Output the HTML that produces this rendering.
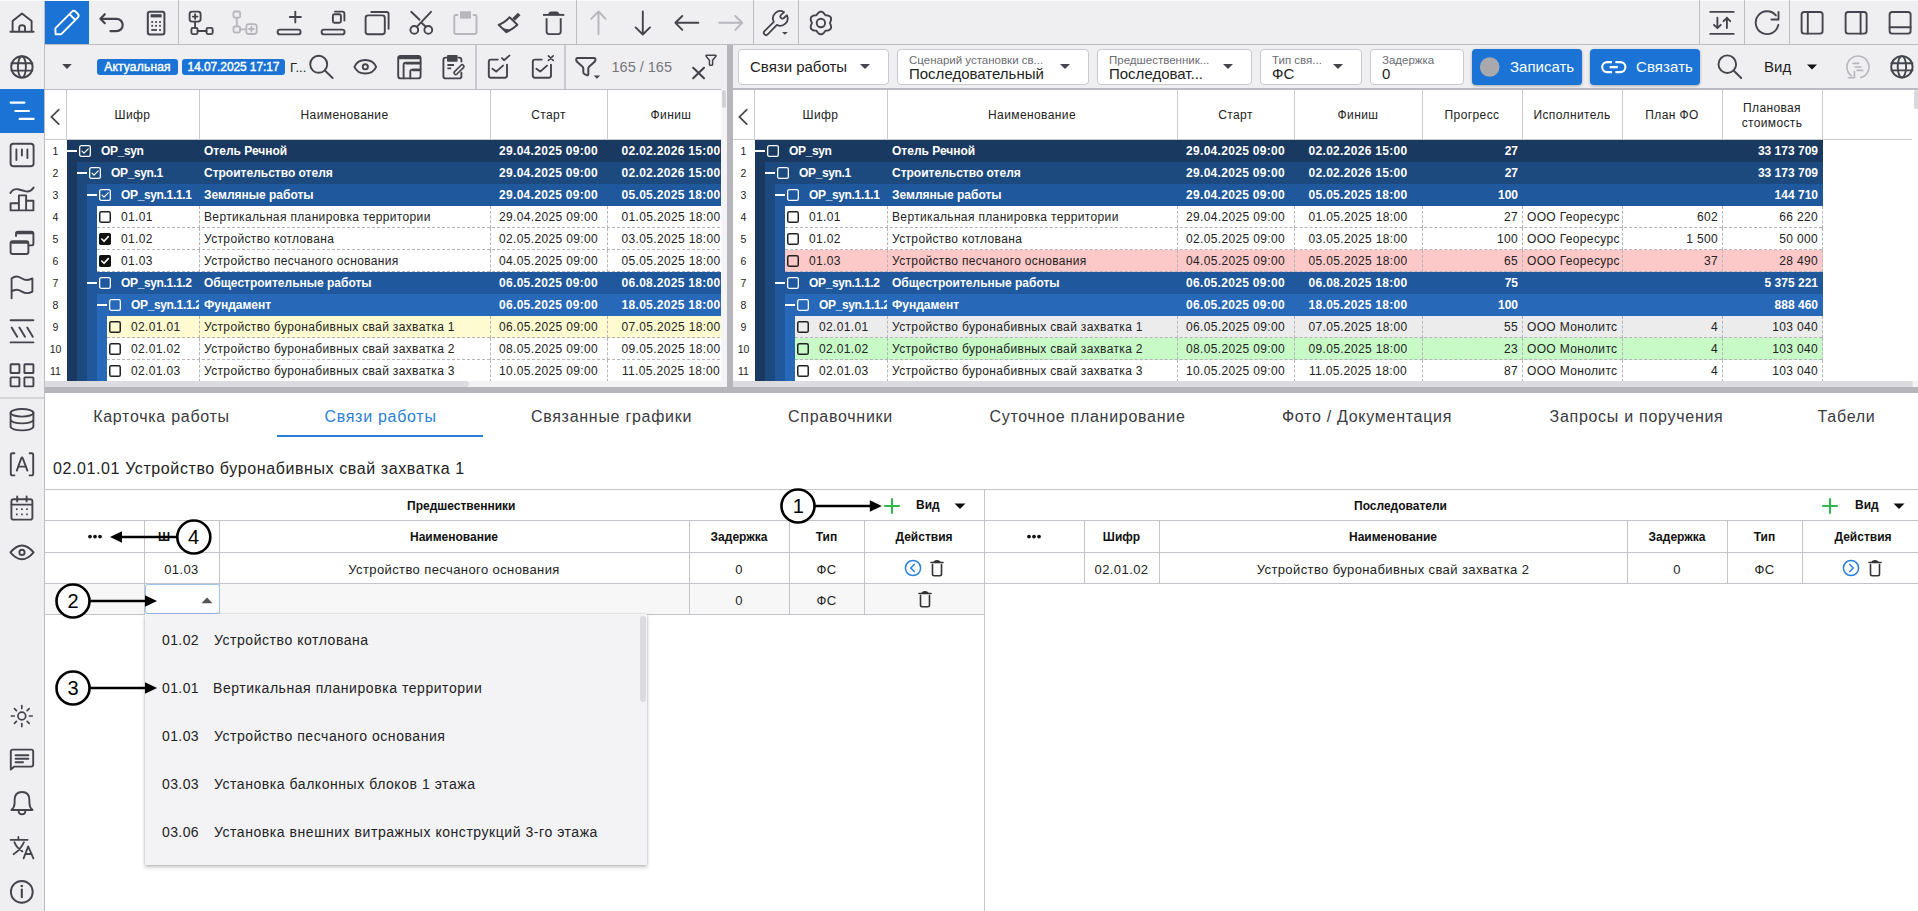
<!DOCTYPE html>
<html><head><meta charset="utf-8"><style>
html,body{margin:0;padding:0;width:1918px;height:911px;overflow:hidden;background:#fff;font-family:"Liberation Sans", sans-serif;color:#222}
svg{overflow:visible}
</style></head><body>
<div style="position:absolute;left:0px;top:0px;width:1918px;height:911px;background:#fff"></div>
<div style="position:absolute;left:0px;top:0px;width:44px;height:911px;background:#efeff2"></div>
<div style="position:absolute;left:44px;top:0px;width:1px;height:911px;background:#bcbcc3"></div>
<div style="position:absolute;left:0px;top:397px;width:44px;height:2px;background:#d3d3d8"></div>
<div style="position:absolute;left:0px;top:89px;width:44px;height:44px;background:#1b74d5"></div>
<div style="position:absolute;left:45px;top:0px;width:1873px;height:44px;background:#efeff2"></div>
<div style="position:absolute;left:45px;top:44px;width:1873px;height:1px;background:#bcbcc3"></div>
<div style="position:absolute;left:45px;top:45px;width:1873px;height:44px;background:#efeff2"></div>
<div style="position:absolute;left:45px;top:89px;width:682px;height:1px;background:#bcbcc3"></div>
<div style="position:absolute;left:733px;top:88px;width:1185px;height:2px;background:#b9b9c0"></div>
<div style="position:absolute;left:45px;top:1px;width:44px;height:43px;background:#1b74d5"></div>
<div style="position:absolute;left:0px;top:0px;width:1918px;height:1px;background:#fafafb"></div>
<div style="position:absolute;left:178px;top:0px;width:1px;height:44px;background:#bcbcc3"></div>
<div style="position:absolute;left:576px;top:0px;width:1px;height:44px;background:#bcbcc3"></div>
<div style="position:absolute;left:753px;top:0px;width:1px;height:44px;background:#bcbcc3"></div>
<div style="position:absolute;left:798px;top:0px;width:1px;height:44px;background:#bcbcc3"></div>
<div style="position:absolute;left:1699px;top:0px;width:1px;height:44px;background:#bcbcc3"></div>
<div style="position:absolute;left:1744px;top:0px;width:1px;height:44px;background:#bcbcc3"></div>
<div style="position:absolute;left:1789px;top:0px;width:1px;height:44px;background:#bcbcc3"></div>
<div style="position:absolute;left:475px;top:45px;width:2px;height:44px;background:#cacad0"></div>
<div style="position:absolute;left:564px;top:45px;width:2px;height:44px;background:#cacad0"></div>
<svg style="position:absolute;left:45px;top:0px;" width="44" height="44" viewBox="45 0 44 44" fill="none" stroke-linecap="round" stroke-linejoin="round"><path stroke="#fff" stroke-width="1.9" d="M55.6 34.3 L55.3 28.3 L72 11.6 Q73.8 10 75.6 11.6 L77.9 13.9 Q79.4 15.7 77.9 17.4 L61.3 34.2 Z M69.5 14.2 L75.3 20"/></svg>
<svg style="position:absolute;left:89px;top:0px;" width="44" height="44" viewBox="89 0 44 44" fill="none" stroke-linecap="round" stroke-linejoin="round"><path stroke="#44444c" stroke-width="2.2" d="M104.8 14.2 L100.4 18.8 L104.8 23.2 M100.8 18.8 H116.5 A6.2 6.2 0 0 1 116.5 31.2 H110.5"/></svg>
<svg style="position:absolute;left:133px;top:0px;" width="44" height="44" viewBox="133 0 44 44" fill="none" stroke-linecap="round" stroke-linejoin="round"><rect x="147.8" y="11.8" width="16.6" height="22.6" rx="2.2" stroke="#44444c" stroke-width="2"/><rect x="150.6" y="14.2" width="11" height="3.2" fill="#44444c"/><rect x="151.29999999999998" y="21.1" width="1.8" height="1.8" fill="#44444c"/><rect x="155.2" y="21.1" width="1.8" height="1.8" fill="#44444c"/><rect x="159.1" y="21.1" width="1.8" height="1.8" fill="#44444c"/><rect x="151.29999999999998" y="24.900000000000002" width="1.8" height="1.8" fill="#44444c"/><rect x="155.2" y="24.900000000000002" width="1.8" height="1.8" fill="#44444c"/><rect x="159.1" y="24.900000000000002" width="1.8" height="1.8" fill="#44444c"/><rect x="151.3" y="29.1" width="5.6" height="1.8" fill="#44444c"/><rect x="159.1" y="29.1" width="1.8" height="1.8" fill="#44444c"/></svg>
<svg style="position:absolute;left:179px;top:0px;" width="44" height="44" viewBox="179 0 44 44" fill="none" stroke-linecap="round" stroke-linejoin="round"><rect x="189.6" y="11.6" width="11" height="10" rx="2.5" stroke="#44444c" stroke-width="1.9"/><path stroke="#44444c" stroke-width="1.9" d="M195.1 14.3 V18.9 M192.8 16.6 H197.4 M195.1 21.6 V28 M197.6 31 H206.5"/><rect x="191.4" y="27.9" width="6.2" height="6.2" rx="1.5" stroke="#44444c" stroke-width="1.9"/><rect x="206.5" y="27.9" width="6.2" height="6.2" rx="1.5" stroke="#44444c" stroke-width="1.9"/></svg>
<svg style="position:absolute;left:223px;top:0px;" width="44" height="44" viewBox="223 0 44 44" fill="none" stroke-linecap="round" stroke-linejoin="round"><rect x="233.5" y="11.5" width="6.6" height="6.2" rx="1.5" stroke="#b6b6bd" stroke-width="1.8"/><path stroke="#b6b6bd" stroke-width="1.8" d="M236.8 17.7 V26.5 M240.1 29.3 H246.3 M251.4 26.6 V31.4 M249 29 H253.8"/><rect x="233.5" y="26.3" width="6.6" height="6.2" rx="1.5" stroke="#b6b6bd" stroke-width="1.8"/><rect x="246.3" y="24.2" width="10.4" height="9.8" rx="2.5" stroke="#b6b6bd" stroke-width="1.8"/></svg>
<svg style="position:absolute;left:267px;top:0px;" width="44" height="44" viewBox="267 0 44 44" fill="none" stroke-linecap="round" stroke-linejoin="round"><path stroke="#44444c" stroke-width="1.9" d="M295.3 11.6 V22.4 M289.8 17 H300.9"/><rect x="277.6" y="29.6" width="23" height="4.8" rx="2.4" stroke="#44444c" stroke-width="1.9"/></svg>
<svg style="position:absolute;left:311px;top:0px;" width="44" height="44" viewBox="311 0 44 44" fill="none" stroke-linecap="round" stroke-linejoin="round"><path stroke="#44444c" stroke-width="1.9" d="M335 11.6 H342.5 Q344.4 11.6 344.4 13.5 V20.5"/><rect x="332.9" y="14.3" width="8" height="8.5" rx="1.5" stroke="#44444c" stroke-width="1.9"/><rect x="321.6" y="29.6" width="23" height="4.8" rx="2.4" stroke="#44444c" stroke-width="1.9"/></svg>
<svg style="position:absolute;left:355px;top:0px;" width="44" height="44" viewBox="355 0 44 44" fill="none" stroke-linecap="round" stroke-linejoin="round"><path stroke="#44444c" stroke-width="1.9" d="M371.3 12 H386.5 Q388.6 12 388.6 14.1 V28.8"/><rect x="365.6" y="15.4" width="19.2" height="18.9" rx="2.5" stroke="#44444c" stroke-width="1.9"/></svg>
<svg style="position:absolute;left:399px;top:0px;" width="44" height="44" viewBox="399 0 44 44" fill="none" stroke-linecap="round" stroke-linejoin="round"><circle cx="414.3" cy="29.9" r="3.9" stroke="#44444c" stroke-width="1.9"/><circle cx="428.3" cy="29.9" r="3.9" stroke="#44444c" stroke-width="1.9"/><path stroke="#44444c" stroke-width="1.9" d="M411.2 11.8 L419.5 19.8 M431 11.8 L416.8 26.8 M421.2 22.5 L425.8 26.8"/></svg>
<svg style="position:absolute;left:443px;top:0px;" width="44" height="44" viewBox="443 0 44 44" fill="none" stroke-linecap="round" stroke-linejoin="round"><path stroke="#b6b6bd" stroke-width="1.9" d="M457.5 15 H455.6 Q454.3 15 454.3 16.4 V32.6 Q454.3 34 455.7 34 H475 Q476.5 34 476.5 32.6 V16.4 Q476.5 15 475.1 15 H473.6"/><rect x="460" y="11.3" width="11" height="7.3" fill="#b6b6bd"/></svg>
<svg style="position:absolute;left:487px;top:0px;" width="44" height="44" viewBox="487 0 44 44" fill="none" stroke-linecap="round" stroke-linejoin="round"><path stroke="#44444c" stroke-width="3.6" stroke-linecap="butt" d="M519.2 13.9 L513.6 19.6"/><path stroke="#44444c" stroke-width="1.9" d="M509.6 17.2 Q504.8 22.6 498.6 24.8 L506.4 32.2 Q512.6 29.4 517.4 24.8 Z"/><path fill="#44444c" d="M501.2 27.3 L506.4 32.6 Q509.6 31.2 511.8 29.4 Q505.5 29.6 501.2 27.3 Z"/></svg>
<svg style="position:absolute;left:531px;top:0px;" width="44" height="44" viewBox="531 0 44 44" fill="none" stroke-linecap="round" stroke-linejoin="round"><path stroke="#44444c" stroke-width="1.9" stroke-linecap="butt" d="M543 14.9 H564.3"/><path stroke="#44444c" stroke-width="1.9" stroke-linecap="butt" d="M546.6 18.2 V31.6 Q546.6 34.1 549.1 34.1 H558.2 Q560.7 34.1 560.7 31.6 V18.2"/><path fill="#44444c" d="M547.8 14.9 Q548.6 11.4 551 11.4 H556.6 Q559 11.4 559.7 14.9 Z"/></svg>
<svg style="position:absolute;left:577px;top:0px;" width="44" height="44" viewBox="577 0 44 44" fill="none" stroke-linecap="round" stroke-linejoin="round"><path stroke="#b6b6bd" stroke-width="1.9" d="M598.5 11.5 V34.3 M591.2 18.8 L598.5 11.5 L605.6 18.8"/></svg>
<svg style="position:absolute;left:621px;top:0px;" width="44" height="44" viewBox="621 0 44 44" fill="none" stroke-linecap="round" stroke-linejoin="round"><path stroke="#44444c" stroke-width="1.9" d="M642.8 11.5 V34.5 M635.6 27.4 L642.8 34.5 L650 27.4"/></svg>
<svg style="position:absolute;left:665px;top:0px;" width="44" height="44" viewBox="665 0 44 44" fill="none" stroke-linecap="round" stroke-linejoin="round"><path stroke="#44444c" stroke-width="1.9" d="M675.4 22.8 H698.4 M682.3 16 L675.4 22.8 L682.3 29.8"/></svg>
<svg style="position:absolute;left:709px;top:0px;" width="44" height="44" viewBox="709 0 44 44" fill="none" stroke-linecap="round" stroke-linejoin="round"><path stroke="#b6b6bd" stroke-width="1.9" d="M719.2 22.8 H742.2 M735.3 16 L742.2 22.8 L735.3 29.8"/></svg>
<svg style="position:absolute;left:754px;top:0px;" width="44" height="44" viewBox="754 0 44 44" fill="none" stroke-linecap="round" stroke-linejoin="round"><path stroke="#44444c" stroke-width="1.8" d="M773.8 21.8 L764.5 31.2 A2.2 2.2 0 0 0 767.7 34.4 L776.9 24.9 A7.3 7.3 0 0 0 786.9 15.3 L783.6 18.2 A2.07 2.07 0 0 1 780.8 15.2 L784.1 12.2 A7.3 7.3 0 0 0 773.8 21.8 Z"/><path fill="#44444c" d="M782 32.1 H787.8 L784.9 34.8 Z"/></svg>
<svg style="position:absolute;left:799px;top:0px;" width="44" height="44" viewBox="799 0 44 44" fill="none" stroke-linecap="round" stroke-linejoin="round"><path stroke="#44444c" stroke-width="1.9" d="M829.90 23.00 L830.13 23.65 L830.46 24.34 L830.77 25.10 L831.01 25.90 L831.12 26.72 L831.08 27.53 L830.86 28.30 L830.47 28.98 L829.92 29.55 L829.23 29.99 L828.47 30.31 L827.65 30.50 L826.84 30.61 L826.08 30.67 L825.40 30.79 L824.96 31.32 L824.52 31.95 L824.02 32.60 L823.44 33.21 L822.79 33.72 L822.06 34.08 L821.29 34.28 L820.51 34.28 L819.74 34.08 L819.01 33.72 L818.36 33.21 L817.78 32.60 L817.28 31.95 L816.84 31.32 L816.40 30.79 L815.72 30.67 L814.96 30.61 L814.15 30.50 L813.33 30.31 L812.57 29.99 L811.88 29.55 L811.33 28.98 L810.94 28.30 L810.72 27.53 L810.68 26.72 L810.79 25.90 L811.03 25.10 L811.34 24.34 L811.67 23.65 L811.90 23.00 L811.67 22.35 L811.34 21.66 L811.03 20.90 L810.79 20.10 L810.68 19.28 L810.72 18.47 L810.94 17.70 L811.33 17.02 L811.88 16.45 L812.57 16.01 L813.33 15.69 L814.15 15.50 L814.96 15.39 L815.72 15.33 L816.40 15.21 L816.84 14.68 L817.28 14.05 L817.78 13.40 L818.36 12.79 L819.01 12.28 L819.74 11.92 L820.51 11.72 L821.29 11.72 L822.06 11.92 L822.79 12.28 L823.44 12.79 L824.02 13.40 L824.52 14.05 L824.96 14.68 L825.40 15.21 L826.08 15.33 L826.84 15.39 L827.65 15.50 L828.47 15.69 L829.23 16.01 L829.92 16.45 L830.47 17.02 L830.86 17.70 L831.08 18.47 L831.12 19.28 L831.01 20.10 L830.77 20.90 L830.46 21.66 L830.13 22.35 L829.90 23.00 Z"/><circle cx="820.9" cy="23" r="4.2" stroke="#44444c" stroke-width="1.9"/></svg>
<svg style="position:absolute;left:1700px;top:0px;" width="44" height="44" viewBox="1700 0 44 44" fill="none" stroke-linecap="round" stroke-linejoin="round"><path stroke="#44444c" stroke-width="1.9" d="M1710.3 11.9 H1733.7 M1710.3 33.9 H1733.7 M1717.4 17.8 V28 M1714 24.8 L1717.4 28.2 L1720.8 24.8 M1726.9 28 V17.8 M1723.6 21.2 L1726.9 17.8 L1730.2 21.2"/></svg>
<svg style="position:absolute;left:1745px;top:0px;" width="44" height="44" viewBox="1745 0 44 44" fill="none" stroke-linecap="round" stroke-linejoin="round"><path stroke="#44444c" stroke-width="1.9" d="M1775.9 15.4 A11.4 11.4 0 1 0 1778.3 24.9"/><path stroke="#44444c" stroke-width="1.9" d="M1778.5 12 V19.5 H1771.4"/></svg>
<svg style="position:absolute;left:1790px;top:0px;" width="44" height="44" viewBox="1790 0 44 44" fill="none" stroke-linecap="round" stroke-linejoin="round"><rect x="1801.6" y="12" width="21" height="21.6" rx="2.6" stroke="#44444c" stroke-width="1.9"/><path stroke="#44444c" stroke-width="1.9" d="M1807.8 12 V33.6"/></svg>
<svg style="position:absolute;left:1834px;top:0px;" width="44" height="44" viewBox="1834 0 44 44" fill="none" stroke-linecap="round" stroke-linejoin="round"><rect x="1845.6" y="12" width="21" height="21.6" rx="2.6" stroke="#44444c" stroke-width="1.9"/><path stroke="#44444c" stroke-width="1.9" d="M1860.6 12 V33.6"/></svg>
<svg style="position:absolute;left:1878px;top:0px;" width="40" height="44" viewBox="1878 0 40 44" fill="none" stroke-linecap="round" stroke-linejoin="round"><rect x="1889.6" y="12" width="21" height="21.6" rx="2.6" stroke="#44444c" stroke-width="1.9"/><path stroke="#44444c" stroke-width="1.9" d="M1889.6 27.3 H1910.6"/></svg>
<svg style="position:absolute;left:55px;top:55px;" width="24" height="24" viewBox="55 55 24 24" fill="none" stroke-linecap="round" stroke-linejoin="round"><path fill="#44444c" d="M62.2 64 H71.8 L67 69 Z"/></svg>
<div style="position:absolute;left:97px;top:59px;width:81px;height:16px;background:#1b74d5;border-radius:3px;color:#fff;font-size:12px;line-height:16px;text-align:center;letter-spacing:0.2px;-webkit-text-stroke:0.4px #fff">Актуальная</div>
<div style="position:absolute;left:182px;top:59px;width:103px;height:16px;background:#1b74d5;border-radius:3px;color:#fff;font-size:12px;line-height:16px;text-align:center;letter-spacing:-0.1px;-webkit-text-stroke:0.4px #fff">14.07.2025 17:17</div>
<div style="position:absolute;left:290px;top:60px;white-space:nowrap;font-size:13px;line-height:16px;color:#222;width:22px;">Г...</div>
<svg style="position:absolute;left:305px;top:45px;" width="40" height="43" viewBox="305 45 40 43" fill="none" stroke-linecap="round" stroke-linejoin="round"><circle cx="318.7" cy="64.3" r="8.5" stroke="#44444c" stroke-width="1.9"/><path stroke="#44444c" stroke-width="1.9" d="M324.9 70.5 L332.6 78"/></svg>
<svg style="position:absolute;left:350px;top:45px;" width="30" height="43" viewBox="350 45 30 43" fill="none" stroke-linecap="round" stroke-linejoin="round"><path stroke="#44444c" stroke-width="1.9" d="M354.4 66.8 C358.6 57.8 372 57.8 376.2 66.8 C372 75.8 358.6 75.8 354.4 66.8 Z"/><circle cx="365.3" cy="66.8" r="2.6" stroke="#44444c" stroke-width="1.9"/></svg>
<svg style="position:absolute;left:395px;top:45px;" width="30" height="43" viewBox="395 45 30 43" fill="none" stroke-linecap="round" stroke-linejoin="round"><rect x="398.2" y="56" width="22.4" height="22.4" rx="2.4" stroke="#44444c" stroke-width="1.9"/><path stroke="#44444c" stroke-width="2.8" d="M399 57.8 H419.8"/><path stroke="#44444c" stroke-width="1.9" d="M403.6 78.2 V65 Q403.6 62.8 405.8 62.8 H420.4 M410.3 78.2 V71.4 Q410.3 69.6 412.3 69.6 H420.4"/><path stroke="#44444c" stroke-width="2.6" stroke-linecap="butt" d="M405.6 63.2 H420 M412.2 70 H420"/></svg>
<svg style="position:absolute;left:438px;top:45px;" width="30" height="43" viewBox="438 45 30 43" fill="none" stroke-linecap="round" stroke-linejoin="round"><path stroke="#44444c" stroke-width="1.9" d="M446.6 57.6 H445.6 Q443.4 57.6 443.4 59.8 V76.2 Q443.4 78.4 445.6 78.4 H459.2 Q461.4 78.4 461.4 76.2 V72.8 M461.4 61.6 V59.8 Q461.4 57.6 459.2 57.6 H458.4"/><rect x="447" y="55" width="10.6" height="6.8" rx="0.8" fill="#44444c"/><path stroke="#44444c" stroke-width="1.9" stroke-linecap="butt" d="M447.4 65 H454 M447.4 68.4 H451.2"/><path stroke="#44444c" stroke-width="1.6" d="M454.6 74 Q453.4 72.8 454.6 71.6 L461 65.2 Q462.2 64 463.4 65.2 Q464.6 66.4 463.4 67.6 L457 74 Q455.8 75.2 454.6 74 Z"/></svg>
<svg style="position:absolute;left:485px;top:45px;" width="28" height="43" viewBox="485 45 28 43" fill="none" stroke-linecap="round" stroke-linejoin="round"><path stroke="#44444c" stroke-width="1.9" d="M497.8 59.6 H491 Q488.8 59.6 488.8 61.8 V75.6 Q488.8 77.8 491 77.8 H504.8 Q507 77.8 507 75.6 V64.6 M492.4 68.8 L496.2 71.6 L503 65.6 M502 58.2 L504 60.2 L509.4 55.6"/></svg>
<svg style="position:absolute;left:529px;top:45px;" width="28" height="43" viewBox="529 45 28 43" fill="none" stroke-linecap="round" stroke-linejoin="round"><path stroke="#44444c" stroke-width="1.9" d="M541.8 59.6 H535 Q532.8 59.6 532.8 61.8 V75.6 Q532.8 77.8 535 77.8 H548.8 Q551 77.8 551 75.6 V64.6 M536.4 68.8 L540.2 71.6 L547 65.6"/><path stroke="#44444c" stroke-width="1.6" d="M548.4 55.8 L553.2 60.4 M553.2 55.8 L548.4 60.4"/></svg>
<svg style="position:absolute;left:572px;top:45px;" width="32" height="43" viewBox="572 45 32 43" fill="none" stroke-linecap="round" stroke-linejoin="round"><path stroke="#44444c" stroke-width="2" d="M577.6 58.1 H594.2 Q595.6 58.1 595.4 60 Q595.2 61.4 593.8 62.6 L589.3 66.5 Q588.3 67.4 588.3 68.6 V74 Q588.3 75.6 586.8 75.1 L585 74.4 Q583.3 73.7 583.3 72 V68.6 Q583.3 67.4 582.3 66.5 L577.8 62.6 Q576.4 61.4 576.2 60 Q576 58.1 577.6 58.1 Z"/><path fill="#44444c" d="M593.6 75.6 H600.2 L596.9 78.8 Z"/></svg>
<div style="position:absolute;left:611.5px;top:46px;white-space:nowrap;font-size:14.5px;color:#76767c;letter-spacing:0.1pxheight:43px;line-height:43px;">165 / 165</div>
<svg style="position:absolute;left:690px;top:45px;" width="30" height="43" viewBox="690 45 30 43" fill="none" stroke-linecap="round" stroke-linejoin="round"><path stroke="#44444c" stroke-width="2.1" d="M693.2 67.8 L704 78.3 M704 67.8 L693.2 78.3"/><path stroke="#44444c" stroke-width="1.5" d="M706.1 56.2 Q705.5 55.3 706.6 55.3 H715.4 Q716.5 55.3 715.9 56.2 L712.6 60.2 V64.4 Q712.6 65.3 711.6 65.3 H710.4 Q709.4 65.3 709.4 64.4 V60.2 Z"/></svg>
<div style="position:absolute;left:738px;top:49px;width:149px;height:34px;background:#fff;border:1px solid #c9c9cf;border-radius:4px"></div>
<div style="position:absolute;left:750px;top:49px;white-space:nowrap;font-size:15px;color:#1e1e22;height:35px;line-height:35px;">Связи работы</div>
<svg style="position:absolute;left:856.6px;top:58px;" width="16" height="16" viewBox="856.6 58 16 16" fill="none" stroke-linecap="round" stroke-linejoin="round"><path fill="#44444c" d="M859.6 64 H869.6 L864.6 69 Z"/></svg>
<div style="position:absolute;left:897px;top:49px;width:190px;height:34px;background:#fff;border:1px solid #c9c9cf;border-radius:4px"></div>
<div style="position:absolute;left:909px;top:53px;white-space:nowrap;font-size:11.5px;color:#6c6c72;letter-spacing:0.1pxheight:15px;line-height:15px;">Сценарий установки св...</div>
<div style="position:absolute;left:909px;top:65px;white-space:nowrap;font-size:15px;color:#1e1e22;height:18px;line-height:18px;">Последовательный</div>
<svg style="position:absolute;left:1057px;top:58px;" width="16" height="16" viewBox="1057 58 16 16" fill="none" stroke-linecap="round" stroke-linejoin="round"><path fill="#44444c" d="M1060 64 H1070 L1065 69 Z"/></svg>
<div style="position:absolute;left:1097px;top:49px;width:153px;height:34px;background:#fff;border:1px solid #c9c9cf;border-radius:4px"></div>
<div style="position:absolute;left:1109px;top:53px;white-space:nowrap;font-size:11.5px;color:#6c6c72;letter-spacing:0.1pxheight:15px;line-height:15px;">Предшественник...</div>
<div style="position:absolute;left:1109px;top:65px;white-space:nowrap;font-size:15px;color:#1e1e22;height:18px;line-height:18px;">Последоват...</div>
<svg style="position:absolute;left:1220px;top:58px;" width="16" height="16" viewBox="1220 58 16 16" fill="none" stroke-linecap="round" stroke-linejoin="round"><path fill="#44444c" d="M1223 64 H1233 L1228 69 Z"/></svg>
<div style="position:absolute;left:1260px;top:49px;width:100px;height:34px;background:#fff;border:1px solid #c9c9cf;border-radius:4px"></div>
<div style="position:absolute;left:1272px;top:53px;white-space:nowrap;font-size:11.5px;color:#6c6c72;letter-spacing:0.1pxheight:15px;line-height:15px;">Тип свя...</div>
<div style="position:absolute;left:1272px;top:65px;white-space:nowrap;font-size:15px;color:#1e1e22;height:18px;line-height:18px;">ФС</div>
<svg style="position:absolute;left:1330px;top:58px;" width="16" height="16" viewBox="1330 58 16 16" fill="none" stroke-linecap="round" stroke-linejoin="round"><path fill="#44444c" d="M1333 64 H1343 L1338 69 Z"/></svg>
<div style="position:absolute;left:1370px;top:49px;width:92px;height:34px;background:#fff;border:1px solid #c9c9cf;border-radius:4px"></div>
<div style="position:absolute;left:1382px;top:53px;white-space:nowrap;font-size:11.5px;color:#6c6c72;letter-spacing:0.1pxheight:15px;line-height:15px;">Задержка</div>
<div style="position:absolute;left:1382px;top:65px;white-space:nowrap;font-size:15px;color:#1e1e22;height:18px;line-height:18px;">0</div>
<div style="position:absolute;left:1472px;top:49px;width:110px;height:36px;background:#1b74d5;border-radius:4px;box-shadow:0 1px 3px rgba(0,0,0,.3)"></div>
<svg style="position:absolute;left:1478px;top:55px;" width="24" height="24" viewBox="1478 55 24 24" fill="none" stroke-linecap="round" stroke-linejoin="round"><circle cx="1489.7" cy="67" r="9.8" fill="#a9a9ad"/></svg>
<div style="position:absolute;left:1510px;top:49px;white-space:nowrap;font-size:15px;color:#fff;letter-spacing:0px;-webkit-text-stroke:0.3px #fffheight:36px;line-height:36px;">Записать</div>
<div style="position:absolute;left:1590px;top:49px;width:110px;height:36px;background:#1b74d5;border-radius:4px;box-shadow:0 1px 3px rgba(0,0,0,.3)"></div>
<svg style="position:absolute;left:1598px;top:55px;" width="30" height="24" viewBox="1598 55 30 24" fill="none" stroke-linecap="round" stroke-linejoin="round"><path stroke="#fff" stroke-width="2.1" stroke-linecap="butt" d="M1612 62.1 H1607.2 A5 5 0 0 0 1607.2 72.1 H1612 M1615.4 62.1 H1620.4 A5 5 0 0 1 1620.4 72.1 H1615.4"/><path stroke="#fff" stroke-width="2.4" stroke-linecap="butt" d="M1609.6 67.1 H1617.8"/></svg>
<div style="position:absolute;left:1636px;top:49px;white-space:nowrap;font-size:15px;color:#fff;letter-spacing:0.1px;-webkit-text-stroke:0.3px #fffheight:36px;line-height:36px;">Связать</div>
<svg style="position:absolute;left:1715px;top:50px;" width="32" height="34" viewBox="1715 50 32 34" fill="none" stroke-linecap="round" stroke-linejoin="round"><circle cx="1727.3" cy="64.2" r="8.8" stroke="#44444c" stroke-width="1.9"/><path stroke="#44444c" stroke-width="1.9" d="M1733.8 70.8 L1741.2 78"/></svg>
<div style="position:absolute;left:1764px;top:45px;white-space:nowrap;font-size:15px;color:#1e1e22;height:43px;line-height:43px;">Вид</div>
<svg style="position:absolute;left:1804px;top:58px;" width="16" height="16" viewBox="1804 58 16 16" fill="none" stroke-linecap="round" stroke-linejoin="round"><path fill="#111" d="M1807 64.6 H1817 L1812 69.6 Z"/></svg>
<svg style="position:absolute;left:1844px;top:52px;" width="30" height="30" viewBox="1844 52 30 30" fill="none" stroke-linecap="round" stroke-linejoin="round"><path stroke="#b6b6bd" stroke-width="1.6" d="M1860.8 77.6 A11 11 0 1 0 1851.4 75.8 M1854.4 71.6 V77.8 H1848.4 M1853 63.4 H1858.8 M1855 67 H1860.8 M1857 70.4 H1862.8"/></svg>
<svg style="position:absolute;left:1888px;top:52px;" width="30" height="30" viewBox="1888 52 30 30" fill="none" stroke-linecap="round" stroke-linejoin="round"><circle cx="1901.9" cy="66.8" r="10.7" stroke="#44444c" stroke-width="1.9"/><ellipse cx="1901.9" cy="66.8" rx="4.2" ry="10.7" stroke="#44444c" stroke-width="1.9"/><path stroke="#44444c" stroke-width="1.9" d="M1891.4 63.2 H1912.4 M1891.4 70.4 H1912.4"/></svg>
<div style="position:absolute;left:45px;top:90px;width:676px;height:291px;overflow:hidden;background:#fff">
<div style="position:absolute;left:0;top:49px;width:676px;height:1px;background:#c9c9cf"></div>
<div style="position:absolute;left:21px;top:0;width:1px;height:50px;background:#c9c9cf"></div>
<div style="position:absolute;left:154px;top:0;width:1px;height:50px;background:#c9c9cf"></div>
<div style="position:absolute;left:21px;top:0;width:133px;height:50px;line-height:50px;text-align:center;font-size:12px;letter-spacing:0.4px;color:#222">Шифр</div>
<div style="position:absolute;left:445px;top:0;width:1px;height:50px;background:#c9c9cf"></div>
<div style="position:absolute;left:154px;top:0;width:291px;height:50px;line-height:50px;text-align:center;font-size:12px;letter-spacing:0.4px;color:#222">Наименование</div>
<div style="position:absolute;left:562px;top:0;width:1px;height:50px;background:#c9c9cf"></div>
<div style="position:absolute;left:445px;top:0;width:117px;height:50px;line-height:50px;text-align:center;font-size:12px;letter-spacing:0.4px;color:#222">Старт</div>
<div style="position:absolute;left:690px;top:0;width:1px;height:50px;background:#c9c9cf"></div>
<div style="position:absolute;left:562px;top:0;width:128px;height:50px;line-height:50px;text-align:center;font-size:12px;letter-spacing:0.4px;color:#222">Финиш</div>
<svg style="position:absolute;left:0;top:0" width="21" height="50" viewBox="0 0 21 50" fill="none"><path stroke="#44444c" stroke-width="1.7" stroke-linecap="round" d="M13.8 19.6 L6.4 26.9 L13.8 34.2"/></svg>
<div style="position:absolute;left:0;top:50px;width:21px;height:22px;line-height:22px;text-align:center;font-size:10.5px;color:#222">1</div>
<div style="position:absolute;left:22px;top:50px;width:669px;height:22px;background:#1a3960"></div>
<div style="position:absolute;left:22px;top:60px;width:10px;height:2px;background:#fff"></div>
<div style="position:absolute;left:34px;top:55px;width:12px;height:12px">
</div>
<svg style="position:absolute;left:34px;top:55px" width="12" height="12" viewBox="0 0 12 12" fill="none" stroke-linecap="round" stroke-linejoin="round"><rect x="0.65" y="0.65" width="10.7" height="10.7" rx="1.6" stroke="#fff" stroke-width="1.3"/><path stroke="#fff" stroke-width="1.2" d="M3 6.2 L5 8.2 L9.2 3.8"/></svg>
<div style="position:absolute;left:56px;top:50px;width:98px;height:22px;line-height:22px;overflow:hidden;white-space:nowrap;font-size:12px;font-weight:bold;color:#fff;letter-spacing:-0.35px;">OP_syn</div>
<div style="position:absolute;left:159px;top:50px;width:286px;height:22px;line-height:22px;overflow:hidden;white-space:nowrap;font-size:12px;font-weight:bold;color:#fff;">Отель Речной</div>
<div style="position:absolute;left:445px;top:50px;width:117px;height:22px;line-height:22px;text-align:center;white-space:nowrap;font-size:12px;font-weight:bold;color:#fff;letter-spacing:0.3px;">29.04.2025 09:00</div>
<div style="position:absolute;left:562px;top:50px;width:128px;height:22px;line-height:22px;text-align:center;white-space:nowrap;font-size:12px;font-weight:bold;color:#fff;letter-spacing:0.3px;">02.02.2026 15:00</div>
<div style="position:absolute;left:0;top:72px;width:21px;height:22px;line-height:22px;text-align:center;font-size:10.5px;color:#222">2</div>
<div style="position:absolute;left:22px;top:72px;width:10px;height:22px;background:#1a3960"></div>
<div style="position:absolute;left:32px;top:72px;width:659px;height:22px;background:#1c4a7f"></div>
<div style="position:absolute;left:32px;top:82px;width:10px;height:2px;background:#fff"></div>
<div style="position:absolute;left:44px;top:77px;width:12px;height:12px">
</div>
<svg style="position:absolute;left:44px;top:77px" width="12" height="12" viewBox="0 0 12 12" fill="none" stroke-linecap="round" stroke-linejoin="round"><rect x="0.65" y="0.65" width="10.7" height="10.7" rx="1.6" stroke="#fff" stroke-width="1.3"/><path stroke="#fff" stroke-width="1.2" d="M3 6.2 L5 8.2 L9.2 3.8"/></svg>
<div style="position:absolute;left:66px;top:72px;width:88px;height:22px;line-height:22px;overflow:hidden;white-space:nowrap;font-size:12px;font-weight:bold;color:#fff;letter-spacing:-0.35px;">OP_syn.1</div>
<div style="position:absolute;left:159px;top:72px;width:286px;height:22px;line-height:22px;overflow:hidden;white-space:nowrap;font-size:12px;font-weight:bold;color:#fff;">Строительство отеля</div>
<div style="position:absolute;left:445px;top:72px;width:117px;height:22px;line-height:22px;text-align:center;white-space:nowrap;font-size:12px;font-weight:bold;color:#fff;letter-spacing:0.3px;">29.04.2025 09:00</div>
<div style="position:absolute;left:562px;top:72px;width:128px;height:22px;line-height:22px;text-align:center;white-space:nowrap;font-size:12px;font-weight:bold;color:#fff;letter-spacing:0.3px;">02.02.2026 15:00</div>
<div style="position:absolute;left:0;top:94px;width:21px;height:22px;line-height:22px;text-align:center;font-size:10.5px;color:#222">3</div>
<div style="position:absolute;left:22px;top:94px;width:10px;height:22px;background:#1a3960"></div>
<div style="position:absolute;left:32px;top:94px;width:10px;height:22px;background:#1c4a7f"></div>
<div style="position:absolute;left:42px;top:94px;width:649px;height:22px;background:#1f589d"></div>
<div style="position:absolute;left:42px;top:104px;width:10px;height:2px;background:#fff"></div>
<div style="position:absolute;left:54px;top:99px;width:12px;height:12px">
</div>
<svg style="position:absolute;left:54px;top:99px" width="12" height="12" viewBox="0 0 12 12" fill="none" stroke-linecap="round" stroke-linejoin="round"><rect x="0.65" y="0.65" width="10.7" height="10.7" rx="1.6" stroke="#fff" stroke-width="1.3"/><path stroke="#fff" stroke-width="1.2" d="M3 6.2 L5 8.2 L9.2 3.8"/></svg>
<div style="position:absolute;left:76px;top:94px;width:78px;height:22px;line-height:22px;overflow:hidden;white-space:nowrap;font-size:12px;font-weight:bold;color:#fff;letter-spacing:-0.35px;">OP_syn.1.1.1</div>
<div style="position:absolute;left:159px;top:94px;width:286px;height:22px;line-height:22px;overflow:hidden;white-space:nowrap;font-size:12px;font-weight:bold;color:#fff;">Земляные работы</div>
<div style="position:absolute;left:445px;top:94px;width:117px;height:22px;line-height:22px;text-align:center;white-space:nowrap;font-size:12px;font-weight:bold;color:#fff;letter-spacing:0.3px;">29.04.2025 09:00</div>
<div style="position:absolute;left:562px;top:94px;width:128px;height:22px;line-height:22px;text-align:center;white-space:nowrap;font-size:12px;font-weight:bold;color:#fff;letter-spacing:0.3px;">05.05.2025 18:00</div>
<div style="position:absolute;left:0;top:116px;width:21px;height:22px;line-height:22px;text-align:center;font-size:10.5px;color:#222">4</div>
<div style="position:absolute;left:22px;top:116px;width:10px;height:22px;background:#1a3960"></div>
<div style="position:absolute;left:32px;top:116px;width:10px;height:22px;background:#1c4a7f"></div>
<div style="position:absolute;left:42px;top:116px;width:10px;height:22px;background:#1f589d"></div>
<div style="position:absolute;left:52px;top:116px;width:639px;height:22px;background:#fff"></div>
<div style="position:absolute;left:52px;top:137px;width:638px;height:0;border-top:1px dashed #b4b4ba"></div>
<svg style="position:absolute;left:54px;top:121px" width="12" height="12" viewBox="0 0 12 12" fill="none" stroke-linecap="round" stroke-linejoin="round"><rect x="0.75" y="0.75" width="10.5" height="10.5" rx="1.6" stroke="#222" stroke-width="1.5"/></svg>
<div style="position:absolute;left:76px;top:116px;width:78px;height:22px;line-height:22px;overflow:hidden;white-space:nowrap;font-size:12px;letter-spacing:0.35px;color:#222;">01.01</div>
<div style="position:absolute;left:445px;top:116px;width:0;height:22px;border-left:1px dashed #b4b4ba"></div>
<div style="position:absolute;left:159px;top:116px;width:286px;height:22px;line-height:22px;overflow:hidden;white-space:nowrap;font-size:12px;letter-spacing:0.35px;color:#222;">Вертикальная планировка территории</div>
<div style="position:absolute;left:562px;top:116px;width:0;height:22px;border-left:1px dashed #b4b4ba"></div>
<div style="position:absolute;left:445px;top:116px;width:117px;height:22px;line-height:22px;text-align:center;white-space:nowrap;font-size:12px;letter-spacing:0.35px;color:#222;">29.04.2025 09:00</div>
<div style="position:absolute;left:690px;top:116px;width:0;height:22px;border-left:1px dashed #b4b4ba"></div>
<div style="position:absolute;left:562px;top:116px;width:128px;height:22px;line-height:22px;text-align:center;white-space:nowrap;font-size:12px;letter-spacing:0.35px;color:#222;">01.05.2025 18:00</div>
<div style="position:absolute;left:154px;top:116px;width:0;height:22px;border-left:1px dashed #b4b4ba"></div>
<div style="position:absolute;left:0;top:138px;width:21px;height:22px;line-height:22px;text-align:center;font-size:10.5px;color:#222">5</div>
<div style="position:absolute;left:22px;top:138px;width:10px;height:22px;background:#1a3960"></div>
<div style="position:absolute;left:32px;top:138px;width:10px;height:22px;background:#1c4a7f"></div>
<div style="position:absolute;left:42px;top:138px;width:10px;height:22px;background:#1f589d"></div>
<div style="position:absolute;left:52px;top:138px;width:639px;height:22px;background:#fff"></div>
<div style="position:absolute;left:52px;top:159px;width:638px;height:0;border-top:1px dashed #b4b4ba"></div>
<svg style="position:absolute;left:54px;top:143px" width="12" height="12" viewBox="0 0 12 12" fill="none" stroke-linecap="round" stroke-linejoin="round"><rect x="0" y="0" width="12" height="12" rx="1.8" fill="#111"/><path stroke="#fff" stroke-width="1.6" d="M2.8 6 L5 8.3 L9.3 3.6"/></svg>
<div style="position:absolute;left:76px;top:138px;width:78px;height:22px;line-height:22px;overflow:hidden;white-space:nowrap;font-size:12px;letter-spacing:0.35px;color:#222;">01.02</div>
<div style="position:absolute;left:445px;top:138px;width:0;height:22px;border-left:1px dashed #b4b4ba"></div>
<div style="position:absolute;left:159px;top:138px;width:286px;height:22px;line-height:22px;overflow:hidden;white-space:nowrap;font-size:12px;letter-spacing:0.35px;color:#222;">Устройство котлована</div>
<div style="position:absolute;left:562px;top:138px;width:0;height:22px;border-left:1px dashed #b4b4ba"></div>
<div style="position:absolute;left:445px;top:138px;width:117px;height:22px;line-height:22px;text-align:center;white-space:nowrap;font-size:12px;letter-spacing:0.35px;color:#222;">02.05.2025 09:00</div>
<div style="position:absolute;left:690px;top:138px;width:0;height:22px;border-left:1px dashed #b4b4ba"></div>
<div style="position:absolute;left:562px;top:138px;width:128px;height:22px;line-height:22px;text-align:center;white-space:nowrap;font-size:12px;letter-spacing:0.35px;color:#222;">03.05.2025 18:00</div>
<div style="position:absolute;left:154px;top:138px;width:0;height:22px;border-left:1px dashed #b4b4ba"></div>
<div style="position:absolute;left:0;top:160px;width:21px;height:22px;line-height:22px;text-align:center;font-size:10.5px;color:#222">6</div>
<div style="position:absolute;left:22px;top:160px;width:10px;height:22px;background:#1a3960"></div>
<div style="position:absolute;left:32px;top:160px;width:10px;height:22px;background:#1c4a7f"></div>
<div style="position:absolute;left:42px;top:160px;width:10px;height:22px;background:#1f589d"></div>
<div style="position:absolute;left:52px;top:160px;width:639px;height:22px;background:#fff"></div>
<div style="position:absolute;left:52px;top:181px;width:638px;height:0;border-top:1px dashed #b4b4ba"></div>
<svg style="position:absolute;left:54px;top:165px" width="12" height="12" viewBox="0 0 12 12" fill="none" stroke-linecap="round" stroke-linejoin="round"><rect x="0" y="0" width="12" height="12" rx="1.8" fill="#111"/><path stroke="#fff" stroke-width="1.6" d="M2.8 6 L5 8.3 L9.3 3.6"/></svg>
<div style="position:absolute;left:76px;top:160px;width:78px;height:22px;line-height:22px;overflow:hidden;white-space:nowrap;font-size:12px;letter-spacing:0.35px;color:#222;">01.03</div>
<div style="position:absolute;left:445px;top:160px;width:0;height:22px;border-left:1px dashed #b4b4ba"></div>
<div style="position:absolute;left:159px;top:160px;width:286px;height:22px;line-height:22px;overflow:hidden;white-space:nowrap;font-size:12px;letter-spacing:0.35px;color:#222;">Устройство песчаного основания</div>
<div style="position:absolute;left:562px;top:160px;width:0;height:22px;border-left:1px dashed #b4b4ba"></div>
<div style="position:absolute;left:445px;top:160px;width:117px;height:22px;line-height:22px;text-align:center;white-space:nowrap;font-size:12px;letter-spacing:0.35px;color:#222;">04.05.2025 09:00</div>
<div style="position:absolute;left:690px;top:160px;width:0;height:22px;border-left:1px dashed #b4b4ba"></div>
<div style="position:absolute;left:562px;top:160px;width:128px;height:22px;line-height:22px;text-align:center;white-space:nowrap;font-size:12px;letter-spacing:0.35px;color:#222;">05.05.2025 18:00</div>
<div style="position:absolute;left:154px;top:160px;width:0;height:22px;border-left:1px dashed #b4b4ba"></div>
<div style="position:absolute;left:0;top:182px;width:21px;height:22px;line-height:22px;text-align:center;font-size:10.5px;color:#222">7</div>
<div style="position:absolute;left:22px;top:182px;width:10px;height:22px;background:#1a3960"></div>
<div style="position:absolute;left:32px;top:182px;width:10px;height:22px;background:#1c4a7f"></div>
<div style="position:absolute;left:42px;top:182px;width:649px;height:22px;background:#1f589d"></div>
<div style="position:absolute;left:42px;top:192px;width:10px;height:2px;background:#fff"></div>
<div style="position:absolute;left:54px;top:187px;width:12px;height:12px">
</div>
<svg style="position:absolute;left:54px;top:187px" width="12" height="12" viewBox="0 0 12 12" fill="none" stroke-linecap="round" stroke-linejoin="round"><rect x="0.65" y="0.65" width="10.7" height="10.7" rx="1.6" stroke="#fff" stroke-width="1.3"/></svg>
<div style="position:absolute;left:76px;top:182px;width:78px;height:22px;line-height:22px;overflow:hidden;white-space:nowrap;font-size:12px;font-weight:bold;color:#fff;letter-spacing:-0.35px;">OP_syn.1.1.2</div>
<div style="position:absolute;left:159px;top:182px;width:286px;height:22px;line-height:22px;overflow:hidden;white-space:nowrap;font-size:12px;font-weight:bold;color:#fff;">Общестроительные работы</div>
<div style="position:absolute;left:445px;top:182px;width:117px;height:22px;line-height:22px;text-align:center;white-space:nowrap;font-size:12px;font-weight:bold;color:#fff;letter-spacing:0.3px;">06.05.2025 09:00</div>
<div style="position:absolute;left:562px;top:182px;width:128px;height:22px;line-height:22px;text-align:center;white-space:nowrap;font-size:12px;font-weight:bold;color:#fff;letter-spacing:0.3px;">06.08.2025 18:00</div>
<div style="position:absolute;left:0;top:204px;width:21px;height:22px;line-height:22px;text-align:center;font-size:10.5px;color:#222">8</div>
<div style="position:absolute;left:22px;top:204px;width:10px;height:22px;background:#1a3960"></div>
<div style="position:absolute;left:32px;top:204px;width:10px;height:22px;background:#1c4a7f"></div>
<div style="position:absolute;left:42px;top:204px;width:10px;height:22px;background:#1f589d"></div>
<div style="position:absolute;left:52px;top:204px;width:639px;height:22px;background:#2768b9"></div>
<div style="position:absolute;left:52px;top:214px;width:10px;height:2px;background:#fff"></div>
<div style="position:absolute;left:64px;top:209px;width:12px;height:12px">
</div>
<svg style="position:absolute;left:64px;top:209px" width="12" height="12" viewBox="0 0 12 12" fill="none" stroke-linecap="round" stroke-linejoin="round"><rect x="0.65" y="0.65" width="10.7" height="10.7" rx="1.6" stroke="#fff" stroke-width="1.3"/></svg>
<div style="position:absolute;left:86px;top:204px;width:68px;height:22px;line-height:22px;overflow:hidden;white-space:nowrap;font-size:12px;font-weight:bold;color:#fff;letter-spacing:-0.35px;">OP_syn.1.1.2.1</div>
<div style="position:absolute;left:159px;top:204px;width:286px;height:22px;line-height:22px;overflow:hidden;white-space:nowrap;font-size:12px;font-weight:bold;color:#fff;">Фундамент</div>
<div style="position:absolute;left:445px;top:204px;width:117px;height:22px;line-height:22px;text-align:center;white-space:nowrap;font-size:12px;font-weight:bold;color:#fff;letter-spacing:0.3px;">06.05.2025 09:00</div>
<div style="position:absolute;left:562px;top:204px;width:128px;height:22px;line-height:22px;text-align:center;white-space:nowrap;font-size:12px;font-weight:bold;color:#fff;letter-spacing:0.3px;">18.05.2025 18:00</div>
<div style="position:absolute;left:0;top:226px;width:21px;height:22px;line-height:22px;text-align:center;font-size:10.5px;color:#222">9</div>
<div style="position:absolute;left:22px;top:226px;width:10px;height:22px;background:#1a3960"></div>
<div style="position:absolute;left:32px;top:226px;width:10px;height:22px;background:#1c4a7f"></div>
<div style="position:absolute;left:42px;top:226px;width:10px;height:22px;background:#1f589d"></div>
<div style="position:absolute;left:52px;top:226px;width:10px;height:22px;background:#2768b9"></div>
<div style="position:absolute;left:62px;top:226px;width:629px;height:22px;background:#fdfbcf"></div>
<div style="position:absolute;left:62px;top:247px;width:628px;height:0;border-top:1px dashed #b4b4ba"></div>
<svg style="position:absolute;left:64px;top:231px" width="12" height="12" viewBox="0 0 12 12" fill="none" stroke-linecap="round" stroke-linejoin="round"><rect x="0.75" y="0.75" width="10.5" height="10.5" rx="1.6" stroke="#222" stroke-width="1.5"/></svg>
<div style="position:absolute;left:86px;top:226px;width:68px;height:22px;line-height:22px;overflow:hidden;white-space:nowrap;font-size:12px;letter-spacing:0.35px;color:#222;">02.01.01</div>
<div style="position:absolute;left:445px;top:226px;width:0;height:22px;border-left:1px dashed #b4b4ba"></div>
<div style="position:absolute;left:159px;top:226px;width:286px;height:22px;line-height:22px;overflow:hidden;white-space:nowrap;font-size:12px;letter-spacing:0.35px;color:#222;">Устройство буронабивных свай захватка 1</div>
<div style="position:absolute;left:562px;top:226px;width:0;height:22px;border-left:1px dashed #b4b4ba"></div>
<div style="position:absolute;left:445px;top:226px;width:117px;height:22px;line-height:22px;text-align:center;white-space:nowrap;font-size:12px;letter-spacing:0.35px;color:#222;">06.05.2025 09:00</div>
<div style="position:absolute;left:690px;top:226px;width:0;height:22px;border-left:1px dashed #b4b4ba"></div>
<div style="position:absolute;left:562px;top:226px;width:128px;height:22px;line-height:22px;text-align:center;white-space:nowrap;font-size:12px;letter-spacing:0.35px;color:#222;">07.05.2025 18:00</div>
<div style="position:absolute;left:154px;top:226px;width:0;height:22px;border-left:1px dashed #b4b4ba"></div>
<div style="position:absolute;left:0;top:248px;width:21px;height:22px;line-height:22px;text-align:center;font-size:10.5px;color:#222">10</div>
<div style="position:absolute;left:22px;top:248px;width:10px;height:22px;background:#1a3960"></div>
<div style="position:absolute;left:32px;top:248px;width:10px;height:22px;background:#1c4a7f"></div>
<div style="position:absolute;left:42px;top:248px;width:10px;height:22px;background:#1f589d"></div>
<div style="position:absolute;left:52px;top:248px;width:10px;height:22px;background:#2768b9"></div>
<div style="position:absolute;left:62px;top:248px;width:629px;height:22px;background:#fff"></div>
<div style="position:absolute;left:62px;top:269px;width:628px;height:0;border-top:1px dashed #b4b4ba"></div>
<svg style="position:absolute;left:64px;top:253px" width="12" height="12" viewBox="0 0 12 12" fill="none" stroke-linecap="round" stroke-linejoin="round"><rect x="0.75" y="0.75" width="10.5" height="10.5" rx="1.6" stroke="#222" stroke-width="1.5"/></svg>
<div style="position:absolute;left:86px;top:248px;width:68px;height:22px;line-height:22px;overflow:hidden;white-space:nowrap;font-size:12px;letter-spacing:0.35px;color:#222;">02.01.02</div>
<div style="position:absolute;left:445px;top:248px;width:0;height:22px;border-left:1px dashed #b4b4ba"></div>
<div style="position:absolute;left:159px;top:248px;width:286px;height:22px;line-height:22px;overflow:hidden;white-space:nowrap;font-size:12px;letter-spacing:0.35px;color:#222;">Устройство буронабивных свай захватка 2</div>
<div style="position:absolute;left:562px;top:248px;width:0;height:22px;border-left:1px dashed #b4b4ba"></div>
<div style="position:absolute;left:445px;top:248px;width:117px;height:22px;line-height:22px;text-align:center;white-space:nowrap;font-size:12px;letter-spacing:0.35px;color:#222;">08.05.2025 09:00</div>
<div style="position:absolute;left:690px;top:248px;width:0;height:22px;border-left:1px dashed #b4b4ba"></div>
<div style="position:absolute;left:562px;top:248px;width:128px;height:22px;line-height:22px;text-align:center;white-space:nowrap;font-size:12px;letter-spacing:0.35px;color:#222;">09.05.2025 18:00</div>
<div style="position:absolute;left:154px;top:248px;width:0;height:22px;border-left:1px dashed #b4b4ba"></div>
<div style="position:absolute;left:0;top:270px;width:21px;height:22px;line-height:22px;text-align:center;font-size:10.5px;color:#222">11</div>
<div style="position:absolute;left:22px;top:270px;width:10px;height:22px;background:#1a3960"></div>
<div style="position:absolute;left:32px;top:270px;width:10px;height:22px;background:#1c4a7f"></div>
<div style="position:absolute;left:42px;top:270px;width:10px;height:22px;background:#1f589d"></div>
<div style="position:absolute;left:52px;top:270px;width:10px;height:22px;background:#2768b9"></div>
<div style="position:absolute;left:62px;top:270px;width:629px;height:22px;background:#fff"></div>
<div style="position:absolute;left:62px;top:291px;width:628px;height:0;border-top:1px dashed #b4b4ba"></div>
<svg style="position:absolute;left:64px;top:275px" width="12" height="12" viewBox="0 0 12 12" fill="none" stroke-linecap="round" stroke-linejoin="round"><rect x="0.75" y="0.75" width="10.5" height="10.5" rx="1.6" stroke="#222" stroke-width="1.5"/></svg>
<div style="position:absolute;left:86px;top:270px;width:68px;height:22px;line-height:22px;overflow:hidden;white-space:nowrap;font-size:12px;letter-spacing:0.35px;color:#222;">02.01.03</div>
<div style="position:absolute;left:445px;top:270px;width:0;height:22px;border-left:1px dashed #b4b4ba"></div>
<div style="position:absolute;left:159px;top:270px;width:286px;height:22px;line-height:22px;overflow:hidden;white-space:nowrap;font-size:12px;letter-spacing:0.35px;color:#222;">Устройство буронабивных свай захватка 3</div>
<div style="position:absolute;left:562px;top:270px;width:0;height:22px;border-left:1px dashed #b4b4ba"></div>
<div style="position:absolute;left:445px;top:270px;width:117px;height:22px;line-height:22px;text-align:center;white-space:nowrap;font-size:12px;letter-spacing:0.35px;color:#222;">10.05.2025 09:00</div>
<div style="position:absolute;left:690px;top:270px;width:0;height:22px;border-left:1px dashed #b4b4ba"></div>
<div style="position:absolute;left:562px;top:270px;width:128px;height:22px;line-height:22px;text-align:center;white-space:nowrap;font-size:12px;letter-spacing:0.35px;color:#222;">11.05.2025 18:00</div>
<div style="position:absolute;left:154px;top:270px;width:0;height:22px;border-left:1px dashed #b4b4ba"></div>
</div>
<div style="position:absolute;left:733px;top:90px;width:1182px;height:291px;overflow:hidden;background:#fff">
<div style="position:absolute;left:0;top:49px;width:1182px;height:1px;background:#c9c9cf"></div>
<div style="position:absolute;left:21px;top:0;width:1px;height:50px;background:#c9c9cf"></div>
<div style="position:absolute;left:154px;top:0;width:1px;height:50px;background:#c9c9cf"></div>
<div style="position:absolute;left:21px;top:0;width:133px;height:50px;line-height:50px;text-align:center;font-size:12px;letter-spacing:0.4px;color:#222">Шифр</div>
<div style="position:absolute;left:444px;top:0;width:1px;height:50px;background:#c9c9cf"></div>
<div style="position:absolute;left:154px;top:0;width:290px;height:50px;line-height:50px;text-align:center;font-size:12px;letter-spacing:0.4px;color:#222">Наименование</div>
<div style="position:absolute;left:561px;top:0;width:1px;height:50px;background:#c9c9cf"></div>
<div style="position:absolute;left:444px;top:0;width:117px;height:50px;line-height:50px;text-align:center;font-size:12px;letter-spacing:0.4px;color:#222">Старт</div>
<div style="position:absolute;left:689px;top:0;width:1px;height:50px;background:#c9c9cf"></div>
<div style="position:absolute;left:561px;top:0;width:128px;height:50px;line-height:50px;text-align:center;font-size:12px;letter-spacing:0.4px;color:#222">Финиш</div>
<div style="position:absolute;left:789px;top:0;width:1px;height:50px;background:#c9c9cf"></div>
<div style="position:absolute;left:689px;top:0;width:100px;height:50px;line-height:50px;text-align:center;font-size:12px;letter-spacing:0.4px;color:#222">Прогресс</div>
<div style="position:absolute;left:889px;top:0;width:1px;height:50px;background:#c9c9cf"></div>
<div style="position:absolute;left:789px;top:0;width:100px;height:50px;line-height:50px;text-align:center;font-size:12px;letter-spacing:0.4px;color:#222">Исполнитель</div>
<div style="position:absolute;left:989px;top:0;width:1px;height:50px;background:#c9c9cf"></div>
<div style="position:absolute;left:889px;top:0;width:100px;height:50px;line-height:50px;text-align:center;font-size:12px;letter-spacing:0.4px;color:#222">План ФО</div>
<div style="position:absolute;left:1089px;top:0;width:1px;height:50px;background:#c9c9cf"></div>
<div style="position:absolute;left:989px;top:0;width:100px;height:50px;display:flex;align-items:center;justify-content:center;text-align:center;font-size:12px;letter-spacing:0.35px;line-height:15px;padding-top:2px;box-sizing:border-box;color:#222">Плановая<br>стоимость</div>
<svg style="position:absolute;left:0;top:0" width="21" height="50" viewBox="0 0 21 50" fill="none"><path stroke="#44444c" stroke-width="1.7" stroke-linecap="round" d="M13.8 19.6 L6.4 26.9 L13.8 34.2"/></svg>
<div style="position:absolute;left:0;top:50px;width:21px;height:22px;line-height:22px;text-align:center;font-size:10.5px;color:#222">1</div>
<div style="position:absolute;left:22px;top:50px;width:1068px;height:22px;background:#1a3960"></div>
<div style="position:absolute;left:22px;top:60px;width:10px;height:2px;background:#fff"></div>
<div style="position:absolute;left:34px;top:55px;width:12px;height:12px">
</div>
<svg style="position:absolute;left:34px;top:55px" width="12" height="12" viewBox="0 0 12 12" fill="none" stroke-linecap="round" stroke-linejoin="round"><rect x="0.65" y="0.65" width="10.7" height="10.7" rx="1.6" stroke="#fff" stroke-width="1.3"/></svg>
<div style="position:absolute;left:56px;top:50px;width:98px;height:22px;line-height:22px;overflow:hidden;white-space:nowrap;font-size:12px;font-weight:bold;color:#fff;letter-spacing:-0.35px;">OP_syn</div>
<div style="position:absolute;left:159px;top:50px;width:285px;height:22px;line-height:22px;overflow:hidden;white-space:nowrap;font-size:12px;font-weight:bold;color:#fff;">Отель Речной</div>
<div style="position:absolute;left:444px;top:50px;width:117px;height:22px;line-height:22px;text-align:center;white-space:nowrap;font-size:12px;font-weight:bold;color:#fff;letter-spacing:0.3px;">29.04.2025 09:00</div>
<div style="position:absolute;left:561px;top:50px;width:128px;height:22px;line-height:22px;text-align:center;white-space:nowrap;font-size:12px;font-weight:bold;color:#fff;letter-spacing:0.3px;">02.02.2026 15:00</div>
<div style="position:absolute;left:689px;top:50px;width:96px;height:22px;line-height:22px;text-align:right;white-space:nowrap;font-size:12px;font-weight:bold;color:#fff;">27</div>
<div style="position:absolute;left:989px;top:50px;width:96px;height:22px;line-height:22px;text-align:right;white-space:nowrap;font-size:12px;font-weight:bold;color:#fff;">33 173 709</div>
<div style="position:absolute;left:0;top:72px;width:21px;height:22px;line-height:22px;text-align:center;font-size:10.5px;color:#222">2</div>
<div style="position:absolute;left:22px;top:72px;width:10px;height:22px;background:#1a3960"></div>
<div style="position:absolute;left:32px;top:72px;width:1058px;height:22px;background:#1c4a7f"></div>
<div style="position:absolute;left:32px;top:82px;width:10px;height:2px;background:#fff"></div>
<div style="position:absolute;left:44px;top:77px;width:12px;height:12px">
</div>
<svg style="position:absolute;left:44px;top:77px" width="12" height="12" viewBox="0 0 12 12" fill="none" stroke-linecap="round" stroke-linejoin="round"><rect x="0.65" y="0.65" width="10.7" height="10.7" rx="1.6" stroke="#fff" stroke-width="1.3"/></svg>
<div style="position:absolute;left:66px;top:72px;width:88px;height:22px;line-height:22px;overflow:hidden;white-space:nowrap;font-size:12px;font-weight:bold;color:#fff;letter-spacing:-0.35px;">OP_syn.1</div>
<div style="position:absolute;left:159px;top:72px;width:285px;height:22px;line-height:22px;overflow:hidden;white-space:nowrap;font-size:12px;font-weight:bold;color:#fff;">Строительство отеля</div>
<div style="position:absolute;left:444px;top:72px;width:117px;height:22px;line-height:22px;text-align:center;white-space:nowrap;font-size:12px;font-weight:bold;color:#fff;letter-spacing:0.3px;">29.04.2025 09:00</div>
<div style="position:absolute;left:561px;top:72px;width:128px;height:22px;line-height:22px;text-align:center;white-space:nowrap;font-size:12px;font-weight:bold;color:#fff;letter-spacing:0.3px;">02.02.2026 15:00</div>
<div style="position:absolute;left:689px;top:72px;width:96px;height:22px;line-height:22px;text-align:right;white-space:nowrap;font-size:12px;font-weight:bold;color:#fff;">27</div>
<div style="position:absolute;left:989px;top:72px;width:96px;height:22px;line-height:22px;text-align:right;white-space:nowrap;font-size:12px;font-weight:bold;color:#fff;">33 173 709</div>
<div style="position:absolute;left:0;top:94px;width:21px;height:22px;line-height:22px;text-align:center;font-size:10.5px;color:#222">3</div>
<div style="position:absolute;left:22px;top:94px;width:10px;height:22px;background:#1a3960"></div>
<div style="position:absolute;left:32px;top:94px;width:10px;height:22px;background:#1c4a7f"></div>
<div style="position:absolute;left:42px;top:94px;width:1048px;height:22px;background:#1f589d"></div>
<div style="position:absolute;left:42px;top:104px;width:10px;height:2px;background:#fff"></div>
<div style="position:absolute;left:54px;top:99px;width:12px;height:12px">
</div>
<svg style="position:absolute;left:54px;top:99px" width="12" height="12" viewBox="0 0 12 12" fill="none" stroke-linecap="round" stroke-linejoin="round"><rect x="0.65" y="0.65" width="10.7" height="10.7" rx="1.6" stroke="#fff" stroke-width="1.3"/></svg>
<div style="position:absolute;left:76px;top:94px;width:78px;height:22px;line-height:22px;overflow:hidden;white-space:nowrap;font-size:12px;font-weight:bold;color:#fff;letter-spacing:-0.35px;">OP_syn.1.1.1</div>
<div style="position:absolute;left:159px;top:94px;width:285px;height:22px;line-height:22px;overflow:hidden;white-space:nowrap;font-size:12px;font-weight:bold;color:#fff;">Земляные работы</div>
<div style="position:absolute;left:444px;top:94px;width:117px;height:22px;line-height:22px;text-align:center;white-space:nowrap;font-size:12px;font-weight:bold;color:#fff;letter-spacing:0.3px;">29.04.2025 09:00</div>
<div style="position:absolute;left:561px;top:94px;width:128px;height:22px;line-height:22px;text-align:center;white-space:nowrap;font-size:12px;font-weight:bold;color:#fff;letter-spacing:0.3px;">05.05.2025 18:00</div>
<div style="position:absolute;left:689px;top:94px;width:96px;height:22px;line-height:22px;text-align:right;white-space:nowrap;font-size:12px;font-weight:bold;color:#fff;">100</div>
<div style="position:absolute;left:989px;top:94px;width:96px;height:22px;line-height:22px;text-align:right;white-space:nowrap;font-size:12px;font-weight:bold;color:#fff;">144 710</div>
<div style="position:absolute;left:0;top:116px;width:21px;height:22px;line-height:22px;text-align:center;font-size:10.5px;color:#222">4</div>
<div style="position:absolute;left:22px;top:116px;width:10px;height:22px;background:#1a3960"></div>
<div style="position:absolute;left:32px;top:116px;width:10px;height:22px;background:#1c4a7f"></div>
<div style="position:absolute;left:42px;top:116px;width:10px;height:22px;background:#1f589d"></div>
<div style="position:absolute;left:52px;top:116px;width:1038px;height:22px;background:#fff"></div>
<div style="position:absolute;left:52px;top:137px;width:1037px;height:0;border-top:1px dashed #b4b4ba"></div>
<svg style="position:absolute;left:54px;top:121px" width="12" height="12" viewBox="0 0 12 12" fill="none" stroke-linecap="round" stroke-linejoin="round"><rect x="0.75" y="0.75" width="10.5" height="10.5" rx="1.6" stroke="#222" stroke-width="1.5"/></svg>
<div style="position:absolute;left:76px;top:116px;width:78px;height:22px;line-height:22px;overflow:hidden;white-space:nowrap;font-size:12px;letter-spacing:0.35px;color:#222;">01.01</div>
<div style="position:absolute;left:444px;top:116px;width:0;height:22px;border-left:1px dashed #b4b4ba"></div>
<div style="position:absolute;left:159px;top:116px;width:285px;height:22px;line-height:22px;overflow:hidden;white-space:nowrap;font-size:12px;letter-spacing:0.35px;color:#222;">Вертикальная планировка территории</div>
<div style="position:absolute;left:561px;top:116px;width:0;height:22px;border-left:1px dashed #b4b4ba"></div>
<div style="position:absolute;left:444px;top:116px;width:117px;height:22px;line-height:22px;text-align:center;white-space:nowrap;font-size:12px;letter-spacing:0.35px;color:#222;">29.04.2025 09:00</div>
<div style="position:absolute;left:689px;top:116px;width:0;height:22px;border-left:1px dashed #b4b4ba"></div>
<div style="position:absolute;left:561px;top:116px;width:128px;height:22px;line-height:22px;text-align:center;white-space:nowrap;font-size:12px;letter-spacing:0.35px;color:#222;">01.05.2025 18:00</div>
<div style="position:absolute;left:789px;top:116px;width:0;height:22px;border-left:1px dashed #b4b4ba"></div>
<div style="position:absolute;left:689px;top:116px;width:96px;height:22px;line-height:22px;text-align:right;white-space:nowrap;font-size:12px;letter-spacing:0.35px;color:#222;">27</div>
<div style="position:absolute;left:889px;top:116px;width:0;height:22px;border-left:1px dashed #b4b4ba"></div>
<div style="position:absolute;left:794px;top:116px;width:95px;height:22px;line-height:22px;overflow:hidden;white-space:nowrap;font-size:12px;letter-spacing:0.35px;color:#222;">ООО Георесурс</div>
<div style="position:absolute;left:989px;top:116px;width:0;height:22px;border-left:1px dashed #b4b4ba"></div>
<div style="position:absolute;left:889px;top:116px;width:96px;height:22px;line-height:22px;text-align:right;white-space:nowrap;font-size:12px;letter-spacing:0.35px;color:#222;">602</div>
<div style="position:absolute;left:1089px;top:116px;width:0;height:22px;border-left:1px dashed #b4b4ba"></div>
<div style="position:absolute;left:989px;top:116px;width:96px;height:22px;line-height:22px;text-align:right;white-space:nowrap;font-size:12px;letter-spacing:0.35px;color:#222;">66 220</div>
<div style="position:absolute;left:154px;top:116px;width:0;height:22px;border-left:1px dashed #b4b4ba"></div>
<div style="position:absolute;left:0;top:138px;width:21px;height:22px;line-height:22px;text-align:center;font-size:10.5px;color:#222">5</div>
<div style="position:absolute;left:22px;top:138px;width:10px;height:22px;background:#1a3960"></div>
<div style="position:absolute;left:32px;top:138px;width:10px;height:22px;background:#1c4a7f"></div>
<div style="position:absolute;left:42px;top:138px;width:10px;height:22px;background:#1f589d"></div>
<div style="position:absolute;left:52px;top:138px;width:1038px;height:22px;background:#fff"></div>
<div style="position:absolute;left:52px;top:159px;width:1037px;height:0;border-top:1px dashed #b4b4ba"></div>
<svg style="position:absolute;left:54px;top:143px" width="12" height="12" viewBox="0 0 12 12" fill="none" stroke-linecap="round" stroke-linejoin="round"><rect x="0.75" y="0.75" width="10.5" height="10.5" rx="1.6" stroke="#222" stroke-width="1.5"/></svg>
<div style="position:absolute;left:76px;top:138px;width:78px;height:22px;line-height:22px;overflow:hidden;white-space:nowrap;font-size:12px;letter-spacing:0.35px;color:#222;">01.02</div>
<div style="position:absolute;left:444px;top:138px;width:0;height:22px;border-left:1px dashed #b4b4ba"></div>
<div style="position:absolute;left:159px;top:138px;width:285px;height:22px;line-height:22px;overflow:hidden;white-space:nowrap;font-size:12px;letter-spacing:0.35px;color:#222;">Устройство котлована</div>
<div style="position:absolute;left:561px;top:138px;width:0;height:22px;border-left:1px dashed #b4b4ba"></div>
<div style="position:absolute;left:444px;top:138px;width:117px;height:22px;line-height:22px;text-align:center;white-space:nowrap;font-size:12px;letter-spacing:0.35px;color:#222;">02.05.2025 09:00</div>
<div style="position:absolute;left:689px;top:138px;width:0;height:22px;border-left:1px dashed #b4b4ba"></div>
<div style="position:absolute;left:561px;top:138px;width:128px;height:22px;line-height:22px;text-align:center;white-space:nowrap;font-size:12px;letter-spacing:0.35px;color:#222;">03.05.2025 18:00</div>
<div style="position:absolute;left:789px;top:138px;width:0;height:22px;border-left:1px dashed #b4b4ba"></div>
<div style="position:absolute;left:689px;top:138px;width:96px;height:22px;line-height:22px;text-align:right;white-space:nowrap;font-size:12px;letter-spacing:0.35px;color:#222;">100</div>
<div style="position:absolute;left:889px;top:138px;width:0;height:22px;border-left:1px dashed #b4b4ba"></div>
<div style="position:absolute;left:794px;top:138px;width:95px;height:22px;line-height:22px;overflow:hidden;white-space:nowrap;font-size:12px;letter-spacing:0.35px;color:#222;">ООО Георесурс</div>
<div style="position:absolute;left:989px;top:138px;width:0;height:22px;border-left:1px dashed #b4b4ba"></div>
<div style="position:absolute;left:889px;top:138px;width:96px;height:22px;line-height:22px;text-align:right;white-space:nowrap;font-size:12px;letter-spacing:0.35px;color:#222;">1 500</div>
<div style="position:absolute;left:1089px;top:138px;width:0;height:22px;border-left:1px dashed #b4b4ba"></div>
<div style="position:absolute;left:989px;top:138px;width:96px;height:22px;line-height:22px;text-align:right;white-space:nowrap;font-size:12px;letter-spacing:0.35px;color:#222;">50 000</div>
<div style="position:absolute;left:154px;top:138px;width:0;height:22px;border-left:1px dashed #b4b4ba"></div>
<div style="position:absolute;left:0;top:160px;width:21px;height:22px;line-height:22px;text-align:center;font-size:10.5px;color:#222">6</div>
<div style="position:absolute;left:22px;top:160px;width:10px;height:22px;background:#1a3960"></div>
<div style="position:absolute;left:32px;top:160px;width:10px;height:22px;background:#1c4a7f"></div>
<div style="position:absolute;left:42px;top:160px;width:10px;height:22px;background:#1f589d"></div>
<div style="position:absolute;left:52px;top:160px;width:1038px;height:22px;background:#fdc8c8"></div>
<div style="position:absolute;left:52px;top:181px;width:1037px;height:0;border-top:1px dashed #b4b4ba"></div>
<svg style="position:absolute;left:54px;top:165px" width="12" height="12" viewBox="0 0 12 12" fill="none" stroke-linecap="round" stroke-linejoin="round"><rect x="0.75" y="0.75" width="10.5" height="10.5" rx="1.6" stroke="#222" stroke-width="1.5"/></svg>
<div style="position:absolute;left:76px;top:160px;width:78px;height:22px;line-height:22px;overflow:hidden;white-space:nowrap;font-size:12px;letter-spacing:0.35px;color:#222;">01.03</div>
<div style="position:absolute;left:444px;top:160px;width:0;height:22px;border-left:1px dashed #b4b4ba"></div>
<div style="position:absolute;left:159px;top:160px;width:285px;height:22px;line-height:22px;overflow:hidden;white-space:nowrap;font-size:12px;letter-spacing:0.35px;color:#222;">Устройство песчаного основания</div>
<div style="position:absolute;left:561px;top:160px;width:0;height:22px;border-left:1px dashed #b4b4ba"></div>
<div style="position:absolute;left:444px;top:160px;width:117px;height:22px;line-height:22px;text-align:center;white-space:nowrap;font-size:12px;letter-spacing:0.35px;color:#222;">04.05.2025 09:00</div>
<div style="position:absolute;left:689px;top:160px;width:0;height:22px;border-left:1px dashed #b4b4ba"></div>
<div style="position:absolute;left:561px;top:160px;width:128px;height:22px;line-height:22px;text-align:center;white-space:nowrap;font-size:12px;letter-spacing:0.35px;color:#222;">05.05.2025 18:00</div>
<div style="position:absolute;left:789px;top:160px;width:0;height:22px;border-left:1px dashed #b4b4ba"></div>
<div style="position:absolute;left:689px;top:160px;width:96px;height:22px;line-height:22px;text-align:right;white-space:nowrap;font-size:12px;letter-spacing:0.35px;color:#222;">65</div>
<div style="position:absolute;left:889px;top:160px;width:0;height:22px;border-left:1px dashed #b4b4ba"></div>
<div style="position:absolute;left:794px;top:160px;width:95px;height:22px;line-height:22px;overflow:hidden;white-space:nowrap;font-size:12px;letter-spacing:0.35px;color:#222;">ООО Георесурс</div>
<div style="position:absolute;left:989px;top:160px;width:0;height:22px;border-left:1px dashed #b4b4ba"></div>
<div style="position:absolute;left:889px;top:160px;width:96px;height:22px;line-height:22px;text-align:right;white-space:nowrap;font-size:12px;letter-spacing:0.35px;color:#222;">37</div>
<div style="position:absolute;left:1089px;top:160px;width:0;height:22px;border-left:1px dashed #b4b4ba"></div>
<div style="position:absolute;left:989px;top:160px;width:96px;height:22px;line-height:22px;text-align:right;white-space:nowrap;font-size:12px;letter-spacing:0.35px;color:#222;">28 490</div>
<div style="position:absolute;left:154px;top:160px;width:0;height:22px;border-left:1px dashed #b4b4ba"></div>
<div style="position:absolute;left:0;top:182px;width:21px;height:22px;line-height:22px;text-align:center;font-size:10.5px;color:#222">7</div>
<div style="position:absolute;left:22px;top:182px;width:10px;height:22px;background:#1a3960"></div>
<div style="position:absolute;left:32px;top:182px;width:10px;height:22px;background:#1c4a7f"></div>
<div style="position:absolute;left:42px;top:182px;width:1048px;height:22px;background:#1f589d"></div>
<div style="position:absolute;left:42px;top:192px;width:10px;height:2px;background:#fff"></div>
<div style="position:absolute;left:54px;top:187px;width:12px;height:12px">
</div>
<svg style="position:absolute;left:54px;top:187px" width="12" height="12" viewBox="0 0 12 12" fill="none" stroke-linecap="round" stroke-linejoin="round"><rect x="0.65" y="0.65" width="10.7" height="10.7" rx="1.6" stroke="#fff" stroke-width="1.3"/></svg>
<div style="position:absolute;left:76px;top:182px;width:78px;height:22px;line-height:22px;overflow:hidden;white-space:nowrap;font-size:12px;font-weight:bold;color:#fff;letter-spacing:-0.35px;">OP_syn.1.1.2</div>
<div style="position:absolute;left:159px;top:182px;width:285px;height:22px;line-height:22px;overflow:hidden;white-space:nowrap;font-size:12px;font-weight:bold;color:#fff;">Общестроительные работы</div>
<div style="position:absolute;left:444px;top:182px;width:117px;height:22px;line-height:22px;text-align:center;white-space:nowrap;font-size:12px;font-weight:bold;color:#fff;letter-spacing:0.3px;">06.05.2025 09:00</div>
<div style="position:absolute;left:561px;top:182px;width:128px;height:22px;line-height:22px;text-align:center;white-space:nowrap;font-size:12px;font-weight:bold;color:#fff;letter-spacing:0.3px;">06.08.2025 18:00</div>
<div style="position:absolute;left:689px;top:182px;width:96px;height:22px;line-height:22px;text-align:right;white-space:nowrap;font-size:12px;font-weight:bold;color:#fff;">75</div>
<div style="position:absolute;left:989px;top:182px;width:96px;height:22px;line-height:22px;text-align:right;white-space:nowrap;font-size:12px;font-weight:bold;color:#fff;">5 375 221</div>
<div style="position:absolute;left:0;top:204px;width:21px;height:22px;line-height:22px;text-align:center;font-size:10.5px;color:#222">8</div>
<div style="position:absolute;left:22px;top:204px;width:10px;height:22px;background:#1a3960"></div>
<div style="position:absolute;left:32px;top:204px;width:10px;height:22px;background:#1c4a7f"></div>
<div style="position:absolute;left:42px;top:204px;width:10px;height:22px;background:#1f589d"></div>
<div style="position:absolute;left:52px;top:204px;width:1038px;height:22px;background:#2768b9"></div>
<div style="position:absolute;left:52px;top:214px;width:10px;height:2px;background:#fff"></div>
<div style="position:absolute;left:64px;top:209px;width:12px;height:12px">
</div>
<svg style="position:absolute;left:64px;top:209px" width="12" height="12" viewBox="0 0 12 12" fill="none" stroke-linecap="round" stroke-linejoin="round"><rect x="0.65" y="0.65" width="10.7" height="10.7" rx="1.6" stroke="#fff" stroke-width="1.3"/></svg>
<div style="position:absolute;left:86px;top:204px;width:68px;height:22px;line-height:22px;overflow:hidden;white-space:nowrap;font-size:12px;font-weight:bold;color:#fff;letter-spacing:-0.35px;">OP_syn.1.1.2.1</div>
<div style="position:absolute;left:159px;top:204px;width:285px;height:22px;line-height:22px;overflow:hidden;white-space:nowrap;font-size:12px;font-weight:bold;color:#fff;">Фундамент</div>
<div style="position:absolute;left:444px;top:204px;width:117px;height:22px;line-height:22px;text-align:center;white-space:nowrap;font-size:12px;font-weight:bold;color:#fff;letter-spacing:0.3px;">06.05.2025 09:00</div>
<div style="position:absolute;left:561px;top:204px;width:128px;height:22px;line-height:22px;text-align:center;white-space:nowrap;font-size:12px;font-weight:bold;color:#fff;letter-spacing:0.3px;">18.05.2025 18:00</div>
<div style="position:absolute;left:689px;top:204px;width:96px;height:22px;line-height:22px;text-align:right;white-space:nowrap;font-size:12px;font-weight:bold;color:#fff;">100</div>
<div style="position:absolute;left:989px;top:204px;width:96px;height:22px;line-height:22px;text-align:right;white-space:nowrap;font-size:12px;font-weight:bold;color:#fff;">888 460</div>
<div style="position:absolute;left:0;top:226px;width:21px;height:22px;line-height:22px;text-align:center;font-size:10.5px;color:#222">9</div>
<div style="position:absolute;left:22px;top:226px;width:10px;height:22px;background:#1a3960"></div>
<div style="position:absolute;left:32px;top:226px;width:10px;height:22px;background:#1c4a7f"></div>
<div style="position:absolute;left:42px;top:226px;width:10px;height:22px;background:#1f589d"></div>
<div style="position:absolute;left:52px;top:226px;width:10px;height:22px;background:#2768b9"></div>
<div style="position:absolute;left:62px;top:226px;width:1028px;height:22px;background:#ececec"></div>
<div style="position:absolute;left:62px;top:247px;width:1027px;height:0;border-top:1px dashed #b4b4ba"></div>
<svg style="position:absolute;left:64px;top:231px" width="12" height="12" viewBox="0 0 12 12" fill="none" stroke-linecap="round" stroke-linejoin="round"><rect x="0.75" y="0.75" width="10.5" height="10.5" rx="1.6" stroke="#222" stroke-width="1.5"/></svg>
<div style="position:absolute;left:86px;top:226px;width:68px;height:22px;line-height:22px;overflow:hidden;white-space:nowrap;font-size:12px;letter-spacing:0.35px;color:#222;">02.01.01</div>
<div style="position:absolute;left:444px;top:226px;width:0;height:22px;border-left:1px dashed #b4b4ba"></div>
<div style="position:absolute;left:159px;top:226px;width:285px;height:22px;line-height:22px;overflow:hidden;white-space:nowrap;font-size:12px;letter-spacing:0.35px;color:#222;">Устройство буронабивных свай захватка 1</div>
<div style="position:absolute;left:561px;top:226px;width:0;height:22px;border-left:1px dashed #b4b4ba"></div>
<div style="position:absolute;left:444px;top:226px;width:117px;height:22px;line-height:22px;text-align:center;white-space:nowrap;font-size:12px;letter-spacing:0.35px;color:#222;">06.05.2025 09:00</div>
<div style="position:absolute;left:689px;top:226px;width:0;height:22px;border-left:1px dashed #b4b4ba"></div>
<div style="position:absolute;left:561px;top:226px;width:128px;height:22px;line-height:22px;text-align:center;white-space:nowrap;font-size:12px;letter-spacing:0.35px;color:#222;">07.05.2025 18:00</div>
<div style="position:absolute;left:789px;top:226px;width:0;height:22px;border-left:1px dashed #b4b4ba"></div>
<div style="position:absolute;left:689px;top:226px;width:96px;height:22px;line-height:22px;text-align:right;white-space:nowrap;font-size:12px;letter-spacing:0.35px;color:#222;">55</div>
<div style="position:absolute;left:889px;top:226px;width:0;height:22px;border-left:1px dashed #b4b4ba"></div>
<div style="position:absolute;left:794px;top:226px;width:95px;height:22px;line-height:22px;overflow:hidden;white-space:nowrap;font-size:12px;letter-spacing:0.35px;color:#222;">ООО Монолитс</div>
<div style="position:absolute;left:989px;top:226px;width:0;height:22px;border-left:1px dashed #b4b4ba"></div>
<div style="position:absolute;left:889px;top:226px;width:96px;height:22px;line-height:22px;text-align:right;white-space:nowrap;font-size:12px;letter-spacing:0.35px;color:#222;">4</div>
<div style="position:absolute;left:1089px;top:226px;width:0;height:22px;border-left:1px dashed #b4b4ba"></div>
<div style="position:absolute;left:989px;top:226px;width:96px;height:22px;line-height:22px;text-align:right;white-space:nowrap;font-size:12px;letter-spacing:0.35px;color:#222;">103 040</div>
<div style="position:absolute;left:154px;top:226px;width:0;height:22px;border-left:1px dashed #b4b4ba"></div>
<div style="position:absolute;left:0;top:248px;width:21px;height:22px;line-height:22px;text-align:center;font-size:10.5px;color:#222">10</div>
<div style="position:absolute;left:22px;top:248px;width:10px;height:22px;background:#1a3960"></div>
<div style="position:absolute;left:32px;top:248px;width:10px;height:22px;background:#1c4a7f"></div>
<div style="position:absolute;left:42px;top:248px;width:10px;height:22px;background:#1f589d"></div>
<div style="position:absolute;left:52px;top:248px;width:10px;height:22px;background:#2768b9"></div>
<div style="position:absolute;left:62px;top:248px;width:1028px;height:22px;background:#c8fac8"></div>
<div style="position:absolute;left:62px;top:269px;width:1027px;height:0;border-top:1px dashed #b4b4ba"></div>
<svg style="position:absolute;left:64px;top:253px" width="12" height="12" viewBox="0 0 12 12" fill="none" stroke-linecap="round" stroke-linejoin="round"><rect x="0.75" y="0.75" width="10.5" height="10.5" rx="1.6" stroke="#222" stroke-width="1.5"/></svg>
<div style="position:absolute;left:86px;top:248px;width:68px;height:22px;line-height:22px;overflow:hidden;white-space:nowrap;font-size:12px;letter-spacing:0.35px;color:#222;">02.01.02</div>
<div style="position:absolute;left:444px;top:248px;width:0;height:22px;border-left:1px dashed #b4b4ba"></div>
<div style="position:absolute;left:159px;top:248px;width:285px;height:22px;line-height:22px;overflow:hidden;white-space:nowrap;font-size:12px;letter-spacing:0.35px;color:#222;">Устройство буронабивных свай захватка 2</div>
<div style="position:absolute;left:561px;top:248px;width:0;height:22px;border-left:1px dashed #b4b4ba"></div>
<div style="position:absolute;left:444px;top:248px;width:117px;height:22px;line-height:22px;text-align:center;white-space:nowrap;font-size:12px;letter-spacing:0.35px;color:#222;">08.05.2025 09:00</div>
<div style="position:absolute;left:689px;top:248px;width:0;height:22px;border-left:1px dashed #b4b4ba"></div>
<div style="position:absolute;left:561px;top:248px;width:128px;height:22px;line-height:22px;text-align:center;white-space:nowrap;font-size:12px;letter-spacing:0.35px;color:#222;">09.05.2025 18:00</div>
<div style="position:absolute;left:789px;top:248px;width:0;height:22px;border-left:1px dashed #b4b4ba"></div>
<div style="position:absolute;left:689px;top:248px;width:96px;height:22px;line-height:22px;text-align:right;white-space:nowrap;font-size:12px;letter-spacing:0.35px;color:#222;">23</div>
<div style="position:absolute;left:889px;top:248px;width:0;height:22px;border-left:1px dashed #b4b4ba"></div>
<div style="position:absolute;left:794px;top:248px;width:95px;height:22px;line-height:22px;overflow:hidden;white-space:nowrap;font-size:12px;letter-spacing:0.35px;color:#222;">ООО Монолитс</div>
<div style="position:absolute;left:989px;top:248px;width:0;height:22px;border-left:1px dashed #b4b4ba"></div>
<div style="position:absolute;left:889px;top:248px;width:96px;height:22px;line-height:22px;text-align:right;white-space:nowrap;font-size:12px;letter-spacing:0.35px;color:#222;">4</div>
<div style="position:absolute;left:1089px;top:248px;width:0;height:22px;border-left:1px dashed #b4b4ba"></div>
<div style="position:absolute;left:989px;top:248px;width:96px;height:22px;line-height:22px;text-align:right;white-space:nowrap;font-size:12px;letter-spacing:0.35px;color:#222;">103 040</div>
<div style="position:absolute;left:154px;top:248px;width:0;height:22px;border-left:1px dashed #b4b4ba"></div>
<div style="position:absolute;left:0;top:270px;width:21px;height:22px;line-height:22px;text-align:center;font-size:10.5px;color:#222">11</div>
<div style="position:absolute;left:22px;top:270px;width:10px;height:22px;background:#1a3960"></div>
<div style="position:absolute;left:32px;top:270px;width:10px;height:22px;background:#1c4a7f"></div>
<div style="position:absolute;left:42px;top:270px;width:10px;height:22px;background:#1f589d"></div>
<div style="position:absolute;left:52px;top:270px;width:10px;height:22px;background:#2768b9"></div>
<div style="position:absolute;left:62px;top:270px;width:1028px;height:22px;background:#fff"></div>
<div style="position:absolute;left:62px;top:291px;width:1027px;height:0;border-top:1px dashed #b4b4ba"></div>
<svg style="position:absolute;left:64px;top:275px" width="12" height="12" viewBox="0 0 12 12" fill="none" stroke-linecap="round" stroke-linejoin="round"><rect x="0.75" y="0.75" width="10.5" height="10.5" rx="1.6" stroke="#222" stroke-width="1.5"/></svg>
<div style="position:absolute;left:86px;top:270px;width:68px;height:22px;line-height:22px;overflow:hidden;white-space:nowrap;font-size:12px;letter-spacing:0.35px;color:#222;">02.01.03</div>
<div style="position:absolute;left:444px;top:270px;width:0;height:22px;border-left:1px dashed #b4b4ba"></div>
<div style="position:absolute;left:159px;top:270px;width:285px;height:22px;line-height:22px;overflow:hidden;white-space:nowrap;font-size:12px;letter-spacing:0.35px;color:#222;">Устройство буронабивных свай захватка 3</div>
<div style="position:absolute;left:561px;top:270px;width:0;height:22px;border-left:1px dashed #b4b4ba"></div>
<div style="position:absolute;left:444px;top:270px;width:117px;height:22px;line-height:22px;text-align:center;white-space:nowrap;font-size:12px;letter-spacing:0.35px;color:#222;">10.05.2025 09:00</div>
<div style="position:absolute;left:689px;top:270px;width:0;height:22px;border-left:1px dashed #b4b4ba"></div>
<div style="position:absolute;left:561px;top:270px;width:128px;height:22px;line-height:22px;text-align:center;white-space:nowrap;font-size:12px;letter-spacing:0.35px;color:#222;">11.05.2025 18:00</div>
<div style="position:absolute;left:789px;top:270px;width:0;height:22px;border-left:1px dashed #b4b4ba"></div>
<div style="position:absolute;left:689px;top:270px;width:96px;height:22px;line-height:22px;text-align:right;white-space:nowrap;font-size:12px;letter-spacing:0.35px;color:#222;">87</div>
<div style="position:absolute;left:889px;top:270px;width:0;height:22px;border-left:1px dashed #b4b4ba"></div>
<div style="position:absolute;left:794px;top:270px;width:95px;height:22px;line-height:22px;overflow:hidden;white-space:nowrap;font-size:12px;letter-spacing:0.35px;color:#222;">ООО Монолитс</div>
<div style="position:absolute;left:989px;top:270px;width:0;height:22px;border-left:1px dashed #b4b4ba"></div>
<div style="position:absolute;left:889px;top:270px;width:96px;height:22px;line-height:22px;text-align:right;white-space:nowrap;font-size:12px;letter-spacing:0.35px;color:#222;">4</div>
<div style="position:absolute;left:1089px;top:270px;width:0;height:22px;border-left:1px dashed #b4b4ba"></div>
<div style="position:absolute;left:989px;top:270px;width:96px;height:22px;line-height:22px;text-align:right;white-space:nowrap;font-size:12px;letter-spacing:0.35px;color:#222;">103 040</div>
<div style="position:absolute;left:154px;top:270px;width:0;height:22px;border-left:1px dashed #b4b4ba"></div>
</div>
<div style="position:absolute;left:721px;top:89px;width:6px;height:292px;background:#f4f4f6"></div>
<div style="position:absolute;left:722px;top:90px;width:4px;height:18px;background:#d2d2d6;border-radius:2px"></div>
<div style="position:absolute;left:727px;top:45px;width:6px;height:348px;background:#b5b5bb"></div>
<div style="position:absolute;left:1912px;top:90px;width:6px;height:291px;background:#fff"></div>
<div style="position:absolute;left:1914px;top:90px;width:4px;height:19px;background:#d9d9dd;border-radius:2px"></div>
<div style="position:absolute;left:45px;top:381px;width:682px;height:6px;background:#f3f3f5"></div>
<div style="position:absolute;left:45px;top:381px;width:424px;height:6px;background:#dcdce0;border-radius:0 3px 3px 0"></div>
<div style="position:absolute;left:733px;top:381px;width:1185px;height:6px;background:#f3f3f5"></div>
<div style="position:absolute;left:733px;top:381px;width:1180px;height:6px;background:#dcdce0;border-radius:0 3px 3px 0"></div>
<div style="position:absolute;left:45px;top:387px;width:1873px;height:6px;background:#b5b5bb"></div>
<div style="position:absolute;left:11.5px;top:405px;width:300px;height:24px;line-height:24px;text-align:center;white-space:nowrap;font-size:16px;letter-spacing:0.72px;color:#3a3a40">Карточка работы</div>
<div style="position:absolute;left:230.5px;top:405px;width:300px;height:24px;line-height:24px;text-align:center;white-space:nowrap;font-size:16px;letter-spacing:0.72px;color:#2b7fd6">Связи работы</div>
<div style="position:absolute;left:461.5px;top:405px;width:300px;height:24px;line-height:24px;text-align:center;white-space:nowrap;font-size:16px;letter-spacing:0.72px;color:#3a3a40">Связанные графики</div>
<div style="position:absolute;left:690.5px;top:405px;width:300px;height:24px;line-height:24px;text-align:center;white-space:nowrap;font-size:16px;letter-spacing:0.72px;color:#3a3a40">Справочники</div>
<div style="position:absolute;left:937.5px;top:405px;width:300px;height:24px;line-height:24px;text-align:center;white-space:nowrap;font-size:16px;letter-spacing:0.72px;color:#3a3a40">Суточное планирование</div>
<div style="position:absolute;left:1217.0px;top:405px;width:300px;height:24px;line-height:24px;text-align:center;white-space:nowrap;font-size:16px;letter-spacing:0.72px;color:#3a3a40">Фото / Документация</div>
<div style="position:absolute;left:1486.5px;top:405px;width:300px;height:24px;line-height:24px;text-align:center;white-space:nowrap;font-size:16px;letter-spacing:0.72px;color:#3a3a40">Запросы и поручения</div>
<div style="position:absolute;left:1696.5px;top:405px;width:300px;height:24px;line-height:24px;text-align:center;white-space:nowrap;font-size:16px;letter-spacing:0.72px;color:#3a3a40">Табели</div>
<div style="position:absolute;left:277px;top:435px;width:206px;height:2px;background:#2b7fd6"></div>
<div style="position:absolute;left:53px;top:457px;white-space:nowrap;font-size:16px;letter-spacing:0.6px;color:#222;height:24px;line-height:24px;">02.01.01 Устройство буронабивных свай захватка 1</div>
<div style="position:absolute;left:45px;top:489px;width:1873px;height:1px;background:#c3c3ca"></div>
<div style="position:absolute;left:45px;top:520px;width:1873px;height:1px;background:#c3c3ca"></div>
<div style="position:absolute;left:45px;top:552px;width:1873px;height:1px;background:#c3c3ca"></div>
<div style="position:absolute;left:45px;top:583px;width:1873px;height:1px;background:#c3c3ca"></div>
<div style="position:absolute;left:45px;top:584px;width:939px;height:30px;background:#f7f7f8"></div>
<div style="position:absolute;left:45px;top:614px;width:939px;height:1px;background:#c3c3ca"></div>
<div style="position:absolute;left:984px;top:489px;width:1px;height:422px;background:#c3c3ca"></div>
<div style="position:absolute;left:144px;top:521px;width:1px;height:93px;background:#c3c3ca"></div>
<div style="position:absolute;left:219px;top:521px;width:1px;height:93px;background:#c3c3ca"></div>
<div style="position:absolute;left:689px;top:521px;width:1px;height:93px;background:#c3c3ca"></div>
<div style="position:absolute;left:789px;top:521px;width:1px;height:93px;background:#c3c3ca"></div>
<div style="position:absolute;left:864px;top:521px;width:1px;height:93px;background:#c3c3ca"></div>
<div style="position:absolute;left:1084px;top:521px;width:1px;height:62px;background:#c3c3ca"></div>
<div style="position:absolute;left:1159px;top:521px;width:1px;height:62px;background:#c3c3ca"></div>
<div style="position:absolute;left:1627px;top:521px;width:1px;height:62px;background:#c3c3ca"></div>
<div style="position:absolute;left:1727px;top:521px;width:1px;height:62px;background:#c3c3ca"></div>
<div style="position:absolute;left:1802px;top:521px;width:1px;height:62px;background:#c3c3ca"></div>
<div style="position:absolute;left:407px;top:491px;white-space:nowrap;font-size:12px;font-weight:bold;color:#111;height:30px;line-height:30px;">Предшественники</div>
<div style="position:absolute;left:1354px;top:491px;white-space:nowrap;font-size:12px;font-weight:bold;color:#111;height:30px;line-height:30px;">Последователи</div>
<div style="position:absolute;left:219px;top:522px;width:470px;height:31px;line-height:31px;text-align:center;white-space:nowrap;font-size:12px;font-weight:bold;color:#111;">Наименование</div>
<div style="position:absolute;left:689px;top:522px;width:100px;height:31px;line-height:31px;text-align:center;white-space:nowrap;font-size:12px;font-weight:bold;color:#111;">Задержка</div>
<div style="position:absolute;left:789px;top:522px;width:75px;height:31px;line-height:31px;text-align:center;white-space:nowrap;font-size:12px;font-weight:bold;color:#111;">Тип</div>
<div style="position:absolute;left:864px;top:522px;width:120px;height:31px;line-height:31px;text-align:center;white-space:nowrap;font-size:12px;font-weight:bold;color:#111;">Действия</div>
<div style="position:absolute;left:1159px;top:522px;width:468px;height:31px;line-height:31px;text-align:center;white-space:nowrap;font-size:12px;font-weight:bold;color:#111;">Наименование</div>
<div style="position:absolute;left:1627px;top:522px;width:100px;height:31px;line-height:31px;text-align:center;white-space:nowrap;font-size:12px;font-weight:bold;color:#111;">Задержка</div>
<div style="position:absolute;left:1727px;top:522px;width:75px;height:31px;line-height:31px;text-align:center;white-space:nowrap;font-size:12px;font-weight:bold;color:#111;">Тип</div>
<div style="position:absolute;left:1802px;top:522px;width:122px;height:31px;line-height:31px;text-align:center;white-space:nowrap;font-size:12px;font-weight:bold;color:#111;">Действия</div>
<div style="position:absolute;left:1084px;top:522px;width:75px;height:31px;line-height:31px;text-align:center;white-space:nowrap;font-size:12px;font-weight:bold;color:#111;">Шифр</div>
<svg style="position:absolute;left:87px;top:530px;" width="16" height="12" viewBox="87 530 16 12" fill="none" stroke-linecap="round" stroke-linejoin="round"><circle cx="90" cy="536.6" r="1.9" fill="#111"/><circle cx="95" cy="536.6" r="1.9" fill="#111"/><circle cx="100" cy="536.6" r="1.9" fill="#111"/></svg>
<svg style="position:absolute;left:1026px;top:530px;" width="16" height="12" viewBox="1026 530 16 12" fill="none" stroke-linecap="round" stroke-linejoin="round"><circle cx="1029" cy="536.6" r="1.9" fill="#111"/><circle cx="1034" cy="536.6" r="1.9" fill="#111"/><circle cx="1039" cy="536.6" r="1.9" fill="#111"/></svg>
<div style="position:absolute;left:158px;top:522px;white-space:nowrap;font-size:12px;font-weight:bold;color:#111;height:31px;line-height:31px;">Ш</div>
<div style="position:absolute;left:144px;top:554px;width:75px;height:31px;line-height:31px;text-align:center;white-space:nowrap;font-size:13px;color:#222;letter-spacing:0.4px;">01.03</div>
<div style="position:absolute;left:219px;top:554px;width:470px;height:31px;line-height:31px;text-align:center;white-space:nowrap;font-size:13px;color:#222;letter-spacing:0.4px;">Устройство песчаного основания</div>
<div style="position:absolute;left:689px;top:554px;width:100px;height:31px;line-height:31px;text-align:center;white-space:nowrap;font-size:13px;color:#222;letter-spacing:0.4px;">0</div>
<div style="position:absolute;left:789px;top:554px;width:75px;height:31px;line-height:31px;text-align:center;white-space:nowrap;font-size:13px;color:#222;letter-spacing:0.4px;">ФС</div>
<div style="position:absolute;left:689px;top:586px;width:100px;height:30px;line-height:30px;text-align:center;white-space:nowrap;font-size:13px;color:#222;letter-spacing:0.4px;">0</div>
<div style="position:absolute;left:789px;top:586px;width:75px;height:30px;line-height:30px;text-align:center;white-space:nowrap;font-size:13px;color:#222;letter-spacing:0.4px;">ФС</div>
<div style="position:absolute;left:1084px;top:554px;width:75px;height:31px;line-height:31px;text-align:center;white-space:nowrap;font-size:13px;color:#222;letter-spacing:0.4px;">02.01.02</div>
<div style="position:absolute;left:1159px;top:554px;width:468px;height:31px;line-height:31px;text-align:center;white-space:nowrap;font-size:13px;color:#222;letter-spacing:0.4px;">Устройство буронабивных свай захватка 2</div>
<div style="position:absolute;left:1627px;top:554px;width:100px;height:31px;line-height:31px;text-align:center;white-space:nowrap;font-size:13px;color:#222;letter-spacing:0.4px;">0</div>
<div style="position:absolute;left:1727px;top:554px;width:75px;height:31px;line-height:31px;text-align:center;white-space:nowrap;font-size:13px;color:#222;letter-spacing:0.4px;">ФС</div>
<svg style="position:absolute;left:883.4px;top:497px;" width="18" height="18" viewBox="883.4 497 18 18" fill="none" stroke-linecap="round" stroke-linejoin="round"><path stroke="#2eb84b" stroke-width="2" stroke-linecap="butt" d="M892.4 498.2 V513.8 M884.6 506 H900.1999999999999"/></svg>
<div style="position:absolute;left:916px;top:490px;white-space:nowrap;font-size:12px;font-weight:bold;color:#111;height:30px;line-height:30px;">Вид</div>
<svg style="position:absolute;left:952.6px;top:499px;" width="14" height="14" viewBox="952.6 499 14 14" fill="none" stroke-linecap="round" stroke-linejoin="round"><path fill="#111" d="M954.1 503.4 H965.1 L959.6 509 Z"/></svg>
<svg style="position:absolute;left:1821px;top:497px;" width="18" height="18" viewBox="1821 497 18 18" fill="none" stroke-linecap="round" stroke-linejoin="round"><path stroke="#2eb84b" stroke-width="2" stroke-linecap="butt" d="M1830 498.2 V513.8 M1822.2 506 H1837.8"/></svg>
<div style="position:absolute;left:1855px;top:490px;white-space:nowrap;font-size:12px;font-weight:bold;color:#111;height:30px;line-height:30px;">Вид</div>
<svg style="position:absolute;left:1891.5px;top:499px;" width="14" height="14" viewBox="1891.5 499 14 14" fill="none" stroke-linecap="round" stroke-linejoin="round"><path fill="#111" d="M1893.0 503.4 H1904.0 L1898.5 509 Z"/></svg>
<svg style="position:absolute;left:902.9px;top:557.6px;" width="20" height="20" viewBox="902.9 557.6 20 20" fill="none" stroke-linecap="round" stroke-linejoin="round"><circle cx="912.9" cy="567.6" r="7.6" stroke="#2a80dc" stroke-width="1.5"/><path stroke="#2a80dc" stroke-width="1.5" d="M914.1 564.0 L910.6999999999999 567.6 L914.1 571.2"/></svg>
<svg style="position:absolute;left:929px;top:558.5px;" width="16" height="18" viewBox="929 558.5 16 18" fill="none" stroke-linecap="round" stroke-linejoin="round"><path stroke="#333" stroke-width="1.6" d="M931 562.0 H943 M932.5 564.0 V573.5 Q932.5 575.2 934.2 575.2 H939.8 Q941.5 575.2 941.5 573.5 V564.0"/><path fill="#333" d="M933.4 562.0 Q933.6 559.5 937 559.5 Q940.4 559.5 940.6 562.0 Z"/></svg>
<svg style="position:absolute;left:917px;top:590.3px;" width="16" height="18" viewBox="917 590.3 16 18" fill="none" stroke-linecap="round" stroke-linejoin="round"><path stroke="#333" stroke-width="1.6" d="M919 593.8 H931 M920.5 595.8 V605.3 Q920.5 607.0 922.2 607.0 H927.8 Q929.5 607.0 929.5 605.3 V595.8"/><path fill="#333" d="M921.4 593.8 Q921.6 591.3 925 591.3 Q928.4 591.3 928.6 593.8 Z"/></svg>
<svg style="position:absolute;left:1841px;top:558px;" width="20" height="20" viewBox="1841 558 20 20" fill="none" stroke-linecap="round" stroke-linejoin="round"><circle cx="1851" cy="568" r="7.6" stroke="#2a80dc" stroke-width="1.5"/><path stroke="#2a80dc" stroke-width="1.5" d="M1849.8 564.4 L1853.2 568 L1849.8 571.6"/></svg>
<svg style="position:absolute;left:1867px;top:559px;" width="16" height="18" viewBox="1867 559 16 18" fill="none" stroke-linecap="round" stroke-linejoin="round"><path stroke="#333" stroke-width="1.6" d="M1869 562.5 H1881 M1870.5 564.5 V574 Q1870.5 575.7 1872.2 575.7 H1877.8 Q1879.5 575.7 1879.5 574 V564.5"/><path fill="#333" d="M1871.4 562.5 Q1871.6 560 1875 560 Q1878.4 560 1878.6 562.5 Z"/></svg>
<div style="position:absolute;left:145px;top:584px;width:73px;height:28px;background:#fff;border:1px solid #9cc3ee;border-radius:3px"></div>
<svg style="position:absolute;left:200px;top:594px;" width="14" height="12" viewBox="200 594 14 12" fill="none" stroke-linecap="round" stroke-linejoin="round"><path fill="#555" d="M201.5 603.2 H212.5 L207 597.6 Z"/></svg>
<div style="position:absolute;left:145px;top:614px;width:502px;height:251px;background:#f3f3f6;box-shadow:0 2px 4px rgba(0,0,0,.25),0 0 1px rgba(0,0,0,.3)"></div>
<div style="position:absolute;left:640px;top:616px;width:6px;height:86px;background:#dcdce0;border-radius:3px"></div>
<div style="position:absolute;left:162px;top:628px;white-space:nowrap;font-size:14px;letter-spacing:0.4px;color:#222;height:24px;line-height:24px;">01.02</div>
<div style="position:absolute;left:214px;top:628px;white-space:nowrap;font-size:14px;letter-spacing:0.55px;color:#222;height:24px;line-height:24px;">Устройство котлована</div>
<div style="position:absolute;left:162px;top:676px;white-space:nowrap;font-size:14px;letter-spacing:0.4px;color:#222;height:24px;line-height:24px;">01.01</div>
<div style="position:absolute;left:213px;top:676px;white-space:nowrap;font-size:14px;letter-spacing:0.55px;color:#222;height:24px;line-height:24px;">Вертикальная планировка территории</div>
<div style="position:absolute;left:162px;top:724px;white-space:nowrap;font-size:14px;letter-spacing:0.4px;color:#222;height:24px;line-height:24px;">01.03</div>
<div style="position:absolute;left:214px;top:724px;white-space:nowrap;font-size:14px;letter-spacing:0.55px;color:#222;height:24px;line-height:24px;">Устройство песчаного основания</div>
<div style="position:absolute;left:162px;top:772px;white-space:nowrap;font-size:14px;letter-spacing:0.4px;color:#222;height:24px;line-height:24px;">03.03</div>
<div style="position:absolute;left:214px;top:772px;white-space:nowrap;font-size:14px;letter-spacing:0.55px;color:#222;height:24px;line-height:24px;">Установка балконных блоков 1 этажа</div>
<div style="position:absolute;left:162px;top:820px;white-space:nowrap;font-size:14px;letter-spacing:0.4px;color:#222;height:24px;line-height:24px;">03.06</div>
<div style="position:absolute;left:214px;top:820px;white-space:nowrap;font-size:14px;letter-spacing:0.55px;color:#222;height:24px;line-height:24px;">Установка внешних витражных конструкций 3-го этажа</div>
<svg style="position:absolute;left:778.2px;top:485.9px;" width="107.79999999999995" height="40" viewBox="778.2 485.9 107.79999999999995 40" fill="none" stroke-linecap="round" stroke-linejoin="round"><circle cx="798.2" cy="505.9" r="16.5" stroke="#000" stroke-width="2.6" fill="#fff"/><path stroke="#000" stroke-width="2.6" stroke-linecap="butt" d="M814.7 505.9 H872"/><path fill="#000" d="M882 505.9 L870 500.09999999999997 V511.7 Z"/></svg>
<div style="position:absolute;left:782.2px;top:493.9px;width:32px;height:24px;line-height:24px;text-align:center;font-size:20px;color:#000">1</div>
<svg style="position:absolute;left:53px;top:580.5px;" width="108" height="40" viewBox="53 580.5 108 40" fill="none" stroke-linecap="round" stroke-linejoin="round"><circle cx="73" cy="600.5" r="16.5" stroke="#000" stroke-width="2.6" fill="#fff"/><path stroke="#000" stroke-width="2.6" stroke-linecap="butt" d="M89.5 600.5 H147"/><path fill="#000" d="M157 600.5 L145 594.7 V606.3 Z"/></svg>
<div style="position:absolute;left:57px;top:588.5px;width:32px;height:24px;line-height:24px;text-align:center;font-size:20px;color:#000">2</div>
<svg style="position:absolute;left:53px;top:668px;" width="108" height="40" viewBox="53 668 108 40" fill="none" stroke-linecap="round" stroke-linejoin="round"><circle cx="73" cy="688" r="16.5" stroke="#000" stroke-width="2.6" fill="#fff"/><path stroke="#000" stroke-width="2.6" stroke-linecap="butt" d="M89.5 688 H147"/><path fill="#000" d="M157 688 L145 682.2 V693.8 Z"/></svg>
<div style="position:absolute;left:57px;top:676px;width:32px;height:24px;line-height:24px;text-align:center;font-size:20px;color:#000">3</div>
<svg style="position:absolute;left:107.7px;top:517px;" width="107.8" height="40" viewBox="107.7 517 107.8 40" fill="none" stroke-linecap="round" stroke-linejoin="round"><circle cx="193.5" cy="537" r="16.5" stroke="#000" stroke-width="2.6" fill="#fff"/><path stroke="#000" stroke-width="2.6" stroke-linecap="butt" d="M177.0 537 H119.7"/><path fill="#000" d="M109.7 537 L121.7 531.2 V542.8 Z"/></svg>
<div style="position:absolute;left:177.5px;top:525px;width:32px;height:24px;line-height:24px;text-align:center;font-size:20px;color:#000">4</div>
<svg style="position:absolute;left:0px;top:0px;" width="44" height="44" viewBox="0 0 44 44" fill="none" stroke-linecap="round" stroke-linejoin="round"><path stroke="#44444c" stroke-width="1.9" d="M12.6 31.6 V21 L22 13.4 L31.6 21 V31.6 M10.4 31.7 H33.6 M19.2 31.6 V27.5 Q19.2 25.3 22.1 25.3 Q25 25.3 25 27.5 V31.6"/></svg>
<svg style="position:absolute;left:0px;top:44px;" width="44" height="44" viewBox="0 44 44 44" fill="none" stroke-linecap="round" stroke-linejoin="round"><circle cx="21.9" cy="66.9" r="10.7" stroke="#44444c" stroke-width="1.9"/><ellipse cx="21.9" cy="66.9" rx="4" ry="10.7" stroke="#44444c" stroke-width="1.9"/><path stroke="#44444c" stroke-width="1.9" d="M11.4 63.2 H32.4 M11.4 70.6 H32.4"/></svg>
<svg style="position:absolute;left:0px;top:89px;" width="44" height="44" viewBox="0 89 44 44" fill="none" stroke-linecap="round" stroke-linejoin="round"><path stroke="#fff" stroke-width="2.1" d="M10.6 102.6 H24.5 M15.3 111 H29 M19.6 118.9 H33.6"/></svg>
<svg style="position:absolute;left:0px;top:133px;" width="44" height="44" viewBox="0 133 44 44" fill="none" stroke-linecap="round" stroke-linejoin="round"><rect x="10.6" y="143.8" width="23" height="22.4" rx="2.6" stroke="#44444c" stroke-width="1.9"/><path stroke="#44444c" stroke-width="1.9" d="M16.4 149.4 V160 M21.9 149.4 V155.5 M27.4 149.4 V158"/></svg>
<svg style="position:absolute;left:0px;top:177px;" width="44" height="44" viewBox="0 177 44 44" fill="none" stroke-linecap="round" stroke-linejoin="round"><path stroke="#44444c" stroke-width="1.9" d="M10.4 193 Q13 188.5 18 189.2 Q22 190 25 191.2 Q30 192.6 33.6 187.6"/><path stroke="#44444c" stroke-width="1.9" d="M10.6 210.4 V203.2 H18.9 V195.4 H26.1 V200.8 H33.4 V210.4 Z M18.9 203.2 V210.4 M26.1 200.8 V210.4"/></svg>
<svg style="position:absolute;left:0px;top:221px;" width="44" height="44" viewBox="0 221 44 44" fill="none" stroke-linecap="round" stroke-linejoin="round"><path stroke="#44444c" stroke-width="1.9" d="M16 236 V233.8 Q16 231.8 18 231.8 H31.4 Q33.4 231.8 33.4 233.8 V243.4 Q33.4 245.4 31.4 245.4 H28.6"/><path stroke="#44444c" stroke-width="2.6" d="M17 233 H32.5"/><rect x="10.6" y="241.2" width="17.8" height="12.8" rx="2" stroke="#44444c" stroke-width="1.9"/><path stroke="#44444c" stroke-width="2.4" d="M11.5 242.5 H27.6"/></svg>
<svg style="position:absolute;left:0px;top:265px;" width="44" height="44" viewBox="0 265 44 44" fill="none" stroke-linecap="round" stroke-linejoin="round"><path stroke="#44444c" stroke-width="1.9" d="M11.6 298.2 V278.4 Q16 274.8 21.5 278.2 Q27 281.6 32.4 278.4 V291.6 Q27 294.8 21.5 291.4 Q16 288 11.6 291.6"/></svg>
<svg style="position:absolute;left:0px;top:309px;" width="44" height="44" viewBox="0 309 44 44" fill="none" stroke-linecap="round" stroke-linejoin="round"><path stroke="#44444c" stroke-width="1.9" d="M10.6 320.2 H33.4 M10.6 342.4 H33.4 M11.6 327.6 L17.2 336.8 M19.4 327.6 L25 336.8 M27.2 327.6 L32.8 336.8"/></svg>
<svg style="position:absolute;left:0px;top:353px;" width="44" height="44" viewBox="0 353 44 44" fill="none" stroke-linecap="round" stroke-linejoin="round"><rect x="10.6" y="364.2" width="8.8" height="8.8" rx="0.6" stroke="#44444c" stroke-width="1.9"/><rect x="24.4" y="364.2" width="9" height="8.8" rx="0.6" stroke="#44444c" stroke-width="1.9"/><rect x="10.6" y="377.4" width="8.8" height="9" rx="0.6" stroke="#44444c" stroke-width="1.9"/><rect x="24.4" y="377.4" width="9" height="9" rx="0.6" stroke="#44444c" stroke-width="1.9"/></svg>
<svg style="position:absolute;left:0px;top:398px;" width="44" height="44" viewBox="0 398 44 44" fill="none" stroke-linecap="round" stroke-linejoin="round"><ellipse cx="22" cy="412.8" rx="11.4" ry="3.8" stroke="#44444c" stroke-width="1.9"/><path stroke="#44444c" stroke-width="1.9" d="M10.6 412.8 V426.6 A11.4 3.8 0 0 0 33.4 426.6 V412.8 M10.6 419.6 A11.4 3.8 0 0 0 33.4 419.6"/></svg>
<svg style="position:absolute;left:0px;top:442px;" width="44" height="44" viewBox="0 442 44 44" fill="none" stroke-linecap="round" stroke-linejoin="round"><path stroke="#44444c" stroke-width="1.9" d="M14.4 453.2 H12.4 Q10.8 453.2 10.8 454.8 V473.8 Q10.8 475.4 12.4 475.4 H14.4 M29.6 453.2 H31.6 Q33.2 453.2 33.2 454.8 V473.8 Q33.2 475.4 31.6 475.4 H29.6 M16.8 470.6 L21.2 458.4 Q22 456.6 22.8 458.4 L27.4 470.6 M18.4 466.6 H25.8"/></svg>
<svg style="position:absolute;left:0px;top:486px;" width="44" height="44" viewBox="0 486 44 44" fill="none" stroke-linecap="round" stroke-linejoin="round"><rect x="11.4" y="499.2" width="21" height="20.4" rx="2.2" stroke="#44444c" stroke-width="1.9"/><path stroke="#44444c" stroke-width="1.9" d="M11.6 504.6 H32.2 M17.2 496.4 V501.4 M26.6 496.4 V501.4"/><rect x="15.950000000000001" y="508.34999999999997" width="1.7" height="1.7" fill="#44444c"/><rect x="21.049999999999997" y="508.34999999999997" width="1.7" height="1.7" fill="#44444c"/><rect x="26.15" y="508.34999999999997" width="1.7" height="1.7" fill="#44444c"/><rect x="15.950000000000001" y="513.55" width="1.7" height="1.7" fill="#44444c"/><rect x="21.049999999999997" y="513.55" width="1.7" height="1.7" fill="#44444c"/><rect x="26.15" y="513.55" width="1.7" height="1.7" fill="#44444c"/></svg>
<svg style="position:absolute;left:0px;top:530px;" width="44" height="44" viewBox="0 530 44 44" fill="none" stroke-linecap="round" stroke-linejoin="round"><path stroke="#44444c" stroke-width="1.9" d="M10.4 552.4 Q22 538.6 33.6 552.4 Q22 566.2 10.4 552.4 Z"/><circle cx="22" cy="552.4" r="2.6" stroke="#44444c" stroke-width="1.9"/></svg>
<svg style="position:absolute;left:0px;top:694px;" width="44" height="44" viewBox="0 694 44 44" fill="none" stroke-linecap="round" stroke-linejoin="round"><circle cx="21.8" cy="716" r="3.9" stroke="#44444c" stroke-width="1.7"/><path stroke="#44444c" stroke-width="1.7" d="M29.40 716.00 L32.20 716.00"/><path stroke="#44444c" stroke-width="1.7" d="M27.17 721.37 L29.15 723.35"/><path stroke="#44444c" stroke-width="1.7" d="M21.80 723.60 L21.80 726.40"/><path stroke="#44444c" stroke-width="1.7" d="M16.43 721.37 L14.45 723.35"/><path stroke="#44444c" stroke-width="1.7" d="M14.20 716.00 L11.40 716.00"/><path stroke="#44444c" stroke-width="1.7" d="M16.43 710.63 L14.45 708.65"/><path stroke="#44444c" stroke-width="1.7" d="M21.80 708.40 L21.80 705.60"/><path stroke="#44444c" stroke-width="1.7" d="M27.17 710.63 L29.15 708.65"/></svg>
<svg style="position:absolute;left:0px;top:738px;" width="44" height="44" viewBox="0 738 44 44" fill="none" stroke-linecap="round" stroke-linejoin="round"><path stroke="#44444c" stroke-width="1.9" d="M10.8 769.6 V751.6 Q10.8 749.6 12.8 749.6 H31.2 Q33.2 749.6 33.2 751.6 V764.6 Q33.2 766.6 31.2 766.6 H14.4 Z M15.6 755.2 H28.4 M15.6 758.8 H28.4 M15.6 762.2 H23"/></svg>
<svg style="position:absolute;left:0px;top:782px;" width="44" height="44" viewBox="0 782 44 44" fill="none" stroke-linecap="round" stroke-linejoin="round"><path stroke="#44444c" stroke-width="1.9" d="M11.4 810 Q14.6 807.4 14.6 803 V800 Q14.6 792 22 792 Q29.4 792 29.4 800 V803 Q29.4 807.4 32.6 810 Z M18.6 810.4 Q18.6 814.2 22 814.2 Q25.4 814.2 25.4 810.4"/></svg>
<svg style="position:absolute;left:0px;top:826px;" width="44" height="44" viewBox="0 826 44 44" fill="none" stroke-linecap="round" stroke-linejoin="round"><path stroke="#44444c" stroke-width="1.8" d="M10.6 839.8 H27.6 M18.4 837 V839.8 M14.4 842.2 Q17 848.6 22.4 851.4 M24 842.2 Q20.4 850 13.6 854.2 M23.6 858.4 L28.2 846.4 L33.4 858.4 M25.2 854 H31.8"/></svg>
<svg style="position:absolute;left:0px;top:870px;" width="44" height="41" viewBox="0 870 44 41" fill="none" stroke-linecap="round" stroke-linejoin="round"><circle cx="21.8" cy="891.9" r="10.9" stroke="#44444c" stroke-width="1.9"/><path stroke="#44444c" stroke-width="2.1" d="M21.8 889.6 V897.2"/><circle cx="21.8" cy="886" r="1.3" fill="#44444c"/></svg>
</body></html>
